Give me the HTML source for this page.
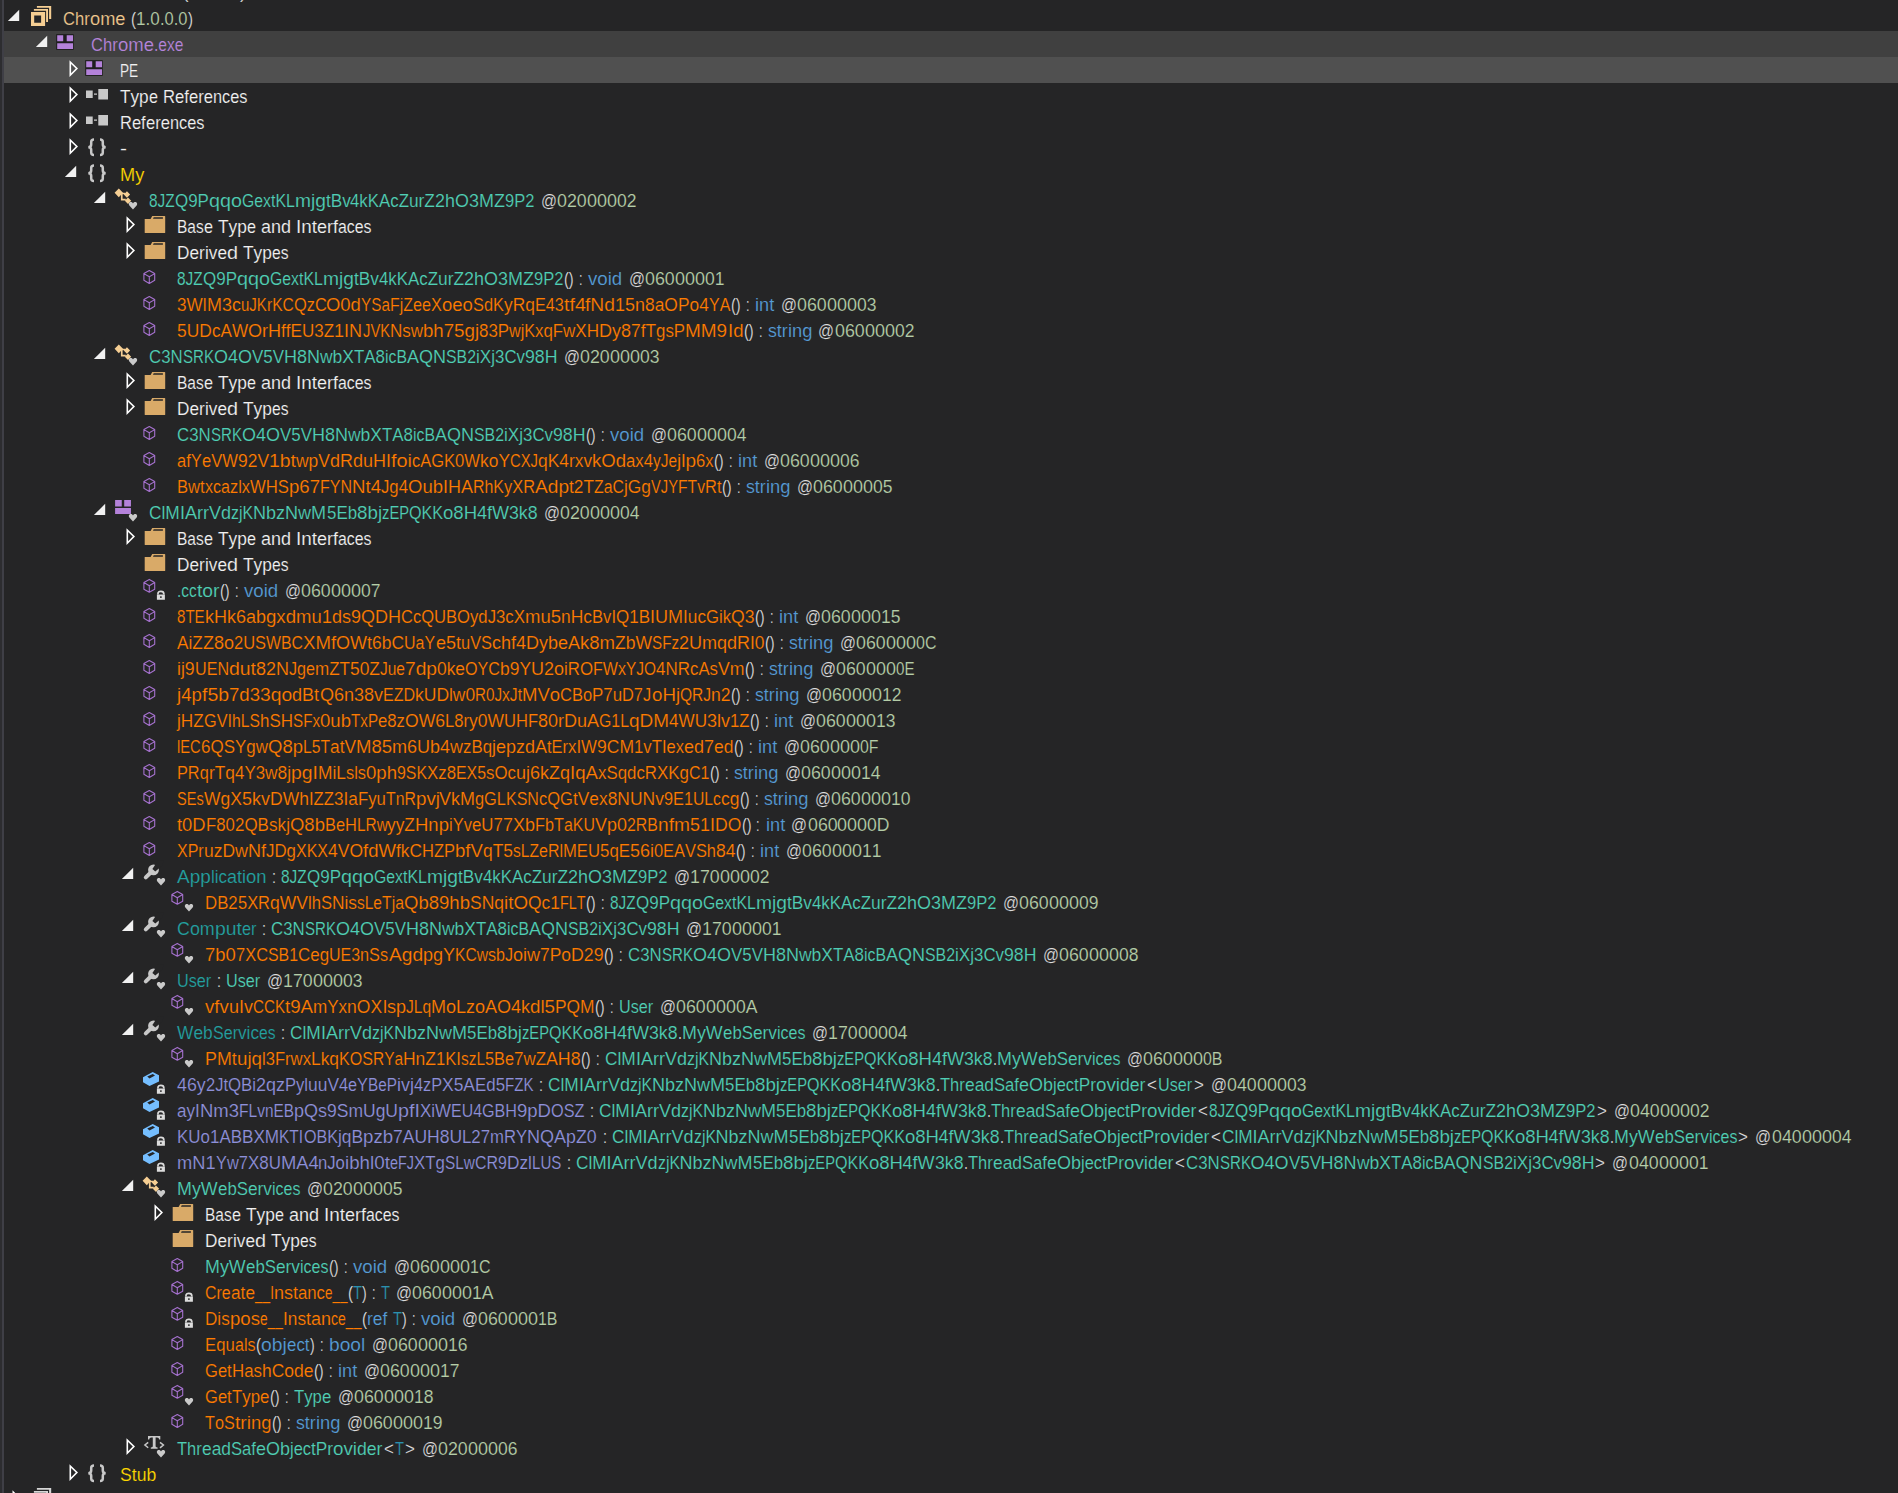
<!DOCTYPE html><html><head><meta charset="utf-8"><title>dnSpy</title><style>
html,body{margin:0;padding:0;background:#252526;}
body{width:1898px;height:1493px;overflow:hidden;position:relative;font-family:"Liberation Sans",sans-serif;font-size:18px;line-height:27px;font-kerning:none;font-variant-ligatures:none;-webkit-font-smoothing:antialiased;}
.hl{position:absolute;left:4px;width:1894px;height:26px;}
.s{position:absolute;white-space:pre;transform-origin:0 0;height:26px;-webkit-text-stroke:0.15px #252526;}
.h1{-webkit-text-stroke-color:#404040}.h2{-webkit-text-stroke-color:#505050}
#lb1{position:absolute;left:0;top:0;width:2px;height:1493px;background:#2D2D30;}
#lb2{position:absolute;left:2px;top:0;width:2px;height:1493px;background:#3F3F46;}
svg{position:absolute;left:0;top:0;}
.t{color:#F1F1F1}
.p{color:#DCDCDC}
.ty{color:#50CFB5}
.m{color:#FF7C00}
.k{color:#569CD6}
.n{color:#B5CEA8}
.ns{color:#FFD700}
.mod{color:#B685DC}
.asm{color:#F0C88E}
.pr{color:#23A0A0}
.f{color:#8E90DA}
.tp{color:#2B91AF}
</style></head><body>
<div id="lb1"></div><div id="lb2"></div>
<div class="hl" style="top:31px;background:#404040"></div>
<div class="hl" style="top:57px;background:#505050"></div>
<span class="s p" style="left:182.5px;top:-21px">(</span><span class="s p" style="left:240px;top:-21px">)</span>
<span class="s asm" style="left:63.3px;top:6px;transform:scaleX(0.921)">Chr</span>
<span class="s asm" style="left:90px;top:6px;transform:scaleX(1.014)">ome</span>
<span class="s p" style="left:131px;top:6px;transform:scaleX(0.834)">(</span>
<span class="s n" style="left:136.3px;top:6px;transform:scaleX(0.947)">1.0</span>
<span class="s n" style="left:160px;top:6px;transform:scaleX(0.916)">.0.0</span>
<span class="s p" style="left:188px;top:6px;transform:scaleX(0.834)">)</span>
<span class="s mod h1" style="left:91.3px;top:32px;transform:scaleX(0.921)">Chr</span>
<span class="s mod h1" style="left:118px;top:32px;transform:scaleX(1.028)">ome</span>
<span class="s mod h1" style="left:154px;top:32px;transform:scaleX(0.867)">.exe</span>
<span class="s t h2" style="left:120.3px;top:58px;transform:scaleX(0.758)">PE</span>
<span class="s t" style="left:120.3px;top:84px;transform:scaleX(0.956)">Typ</span>
<span class="s t" style="left:149px;top:84px;transform:scaleX(0.899)">e</span>
<span class="s t" style="left:163px;top:84px;transform:scaleX(0.928)">Ref</span>
<span class="s t" style="left:189px;top:84px;transform:scaleX(0.923)">ere</span>
<span class="s t" style="left:213px;top:84px;transform:scaleX(0.907)">nces</span>
<span class="s t" style="left:120.3px;top:110px;transform:scaleX(0.918)">Ref</span>
<span class="s t" style="left:146px;top:110px;transform:scaleX(0.923)">ere</span>
<span class="s t" style="left:170px;top:110px;transform:scaleX(0.907)">nces</span>
<span class="s t" style="left:120px;top:136px;transform:scaleX(1.168)">-</span>
<span class="s ns" style="left:120.3px;top:162px;transform:scaleX(1.009)">My</span>
<span class="s ty" style="left:149.3px;top:188px;transform:scaleX(0.854)">8JZ</span>
<span class="s ty" style="left:174.9px;top:188px;transform:scaleX(0.941)">Q9P</span>
<span class="s ty" style="left:208.8px;top:188px;transform:scaleX(1.095)">qqo</span>
<span class="s ty" style="left:241.7px;top:188px;transform:scaleX(0.876)">Gex</span>
<span class="s ty" style="left:270.6px;top:188px;transform:scaleX(0.886)">tKL</span>
<span class="s ty" style="left:294.5px;top:188px;transform:scaleX(1.066)">mjg</span>
<span class="s ty" style="left:325.5px;top:188px;transform:scaleX(0.958)">tBv</span>
<span class="s ty" style="left:350.4px;top:188px;transform:scaleX(0.932)">4kK</span>
<span class="s ty" style="left:379.3px;top:188px;transform:scaleX(0.935)">AcZ</span>
<span class="s ty" style="left:409.2px;top:188px;transform:scaleX(0.960)">urZ</span>
<span class="s ty" style="left:435.1px;top:188px;transform:scaleX(0.996)">2hO</span>
<span class="s ty" style="left:469px;top:188px;transform:scaleX(0.997)">3MZ</span>
<span class="s ty" style="left:504.9px;top:188px;transform:scaleX(0.918)">9P2</span>
<span class="s p" style="left:540.5px;top:188px;transform:scaleX(0.876)">@</span>
<span class="s n" style="left:557.1px;top:188px;transform:scaleX(0.989)">020</span>
<span class="s n" style="left:586.8px;top:188px;transform:scaleX(0.999)">000</span>
<span class="s n" style="left:616.8px;top:188px;transform:scaleX(0.974)">02</span>
<span class="s t" style="left:177.3px;top:214px;transform:scaleX(0.861)">Bas</span>
<span class="s t" style="left:204px;top:214px;transform:scaleX(0.899)">e</span>
<span class="s t" style="left:218px;top:214px;transform:scaleX(0.966)">Typ</span>
<span class="s t" style="left:247px;top:214px;transform:scaleX(0.899)">e</span>
<span class="s t" style="left:261px;top:214px;transform:scaleX(0.999)">and</span>
<span class="s t" style="left:296px;top:214px;transform:scaleX(1.049)">Int</span>
<span class="s t" style="left:317px;top:214px;transform:scaleX(1.000)">erf</span>
<span class="s t" style="left:338px;top:214px;transform:scaleX(0.881)">aces</span>
<span class="s t" style="left:177.3px;top:240px;transform:scaleX(0.955)">Der</span>
<span class="s t" style="left:205px;top:240px;transform:scaleX(0.956)">ive</span>
<span class="s t" style="left:227px;top:240px;transform:scaleX(1.099)">d</span>
<span class="s t" style="left:243px;top:240px;transform:scaleX(0.966)">Typ</span>
<span class="s t" style="left:272px;top:240px;transform:scaleX(0.868)">es</span>
<span class="s ty" style="left:177.3px;top:266px;transform:scaleX(0.856)">8JZ</span>
<span class="s ty" style="left:203px;top:266px;transform:scaleX(0.944)">Q9P</span>
<span class="s ty" style="left:237px;top:266px;transform:scaleX(1.099)">qqo</span>
<span class="s ty" style="left:270px;top:266px;transform:scaleX(0.878)">Gex</span>
<span class="s ty" style="left:299px;top:266px;transform:scaleX(0.888)">tKL</span>
<span class="s ty" style="left:323px;top:266px;transform:scaleX(1.069)">mjg</span>
<span class="s ty" style="left:354px;top:266px;transform:scaleX(0.961)">tBv</span>
<span class="s ty" style="left:379px;top:266px;transform:scaleX(0.935)">4kK</span>
<span class="s ty" style="left:408px;top:266px;transform:scaleX(0.937)">AcZ</span>
<span class="s ty" style="left:438px;top:266px;transform:scaleX(0.963)">urZ</span>
<span class="s ty" style="left:464px;top:266px;transform:scaleX(0.999)">2hO</span>
<span class="s ty" style="left:498px;top:266px;transform:scaleX(1.000)">3MZ</span>
<span class="s ty" style="left:534px;top:266px;transform:scaleX(0.921)">9P2</span>
<span class="s p" style="left:564.3px;top:266px;transform:scaleX(0.809)">()</span>
<span class="s p" style="left:579px;top:266px;transform:scaleX(0.700)">:</span>
<span class="s k" style="left:588.3px;top:266px;transform:scaleX(1.036)">void</span>
<span class="s p" style="left:628.7px;top:266px;transform:scaleX(0.876)">@</span>
<span class="s n" style="left:645.3px;top:266px;transform:scaleX(0.989)">060</span>
<span class="s n" style="left:675px;top:266px;transform:scaleX(0.999)">000</span>
<span class="s n" style="left:705px;top:266px;transform:scaleX(0.974)">01</span>
<span class="s m" style="left:177.3px;top:292px;transform:scaleX(0.954)">3Wl</span>
<span class="s m" style="left:206.9px;top:292px;transform:scaleX(0.996)">M3c</span>
<span class="s m" style="left:240.7px;top:292px;transform:scaleX(0.835)">uJK</span>
<span class="s m" style="left:266.6px;top:292px;transform:scaleX(0.868)">rKC</span>
<span class="s m" style="left:293.5px;top:292px;transform:scaleX(0.913)">QzC</span>
<span class="s m" style="left:326.4px;top:292px;transform:scaleX(1.025)">O0d</span>
<span class="s m" style="left:361.3px;top:292px;transform:scaleX(0.849)">YSa</span>
<span class="s m" style="left:390.2px;top:292px;transform:scaleX(0.881)">FjZ</span>
<span class="s m" style="left:413.1px;top:292px;transform:scaleX(0.902)">eeX</span>
<span class="s m" style="left:441.9px;top:292px;transform:scaleX(1.028)">oeo</span>
<span class="s m" style="left:472.8px;top:292px;transform:scaleX(0.908)">SdK</span>
<span class="s m" style="left:503.7px;top:292px;transform:scaleX(0.965)">yRq</span>
<span class="s m" style="left:534.6px;top:292px;transform:scaleX(0.902)">E43</span>
<span class="s m" style="left:563.5px;top:292px;transform:scaleX(1.095)">tf4</span>
<span class="s m" style="left:585.4px;top:292px;transform:scaleX(1.067)">fNd</span>
<span class="s m" style="left:615.3px;top:292px;transform:scaleX(0.995)">15n</span>
<span class="s m" style="left:645.1px;top:292px;transform:scaleX(0.966)">8aO</span>
<span class="s m" style="left:678px;top:292px;transform:scaleX(0.964)">Po4</span>
<span class="s m" style="left:708.9px;top:292px;transform:scaleX(0.892)">YA</span>
<span class="s p" style="left:731.1px;top:292px;transform:scaleX(0.809)">()</span>
<span class="s p" style="left:745.8px;top:292px;transform:scaleX(0.700)">:</span>
<span class="s k" style="left:755.1px;top:292px;transform:scaleX(1.010)">int</span>
<span class="s p" style="left:780.5px;top:292px;transform:scaleX(0.876)">@</span>
<span class="s n" style="left:797.1px;top:292px;transform:scaleX(0.989)">060</span>
<span class="s n" style="left:826.8px;top:292px;transform:scaleX(0.999)">000</span>
<span class="s n" style="left:856.8px;top:292px;transform:scaleX(0.974)">03</span>
<span class="s m" style="left:177.3px;top:318px;transform:scaleX(0.966)">5UD</span>
<span class="s m" style="left:212.1px;top:318px;transform:scaleX(0.950)">cAW</span>
<span class="s m" style="left:248.2px;top:318px;transform:scaleX(1.003)">OrH</span>
<span class="s m" style="left:281.3px;top:318px;transform:scaleX(0.957)">ffE</span>
<span class="s m" style="left:302.3px;top:318px;transform:scaleX(0.944)">U3Z</span>
<span class="s m" style="left:334.4px;top:318px;transform:scaleX(1.002)">1IN</span>
<span class="s m" style="left:362.5px;top:318px;transform:scaleX(0.820)">JVK</span>
<span class="s m" style="left:389.6px;top:318px;transform:scaleX(0.945)">Nsw</span>
<span class="s m" style="left:422.7px;top:318px;transform:scaleX(1.035)">bh7</span>
<span class="s m" style="left:453.7px;top:318px;transform:scaleX(1.044)">5gj</span>
<span class="s m" style="left:478.8px;top:318px;transform:scaleX(0.939)">83P</span>
<span class="s m" style="left:508.9px;top:318px;transform:scaleX(0.899)">wjK</span>
<span class="s m" style="left:534.9px;top:318px;transform:scaleX(0.936)">xqF</span>
<span class="s m" style="left:563px;top:318px;transform:scaleX(0.950)">wXH</span>
<span class="s m" style="left:599.1px;top:318px;transform:scaleX(1.002)">Dy8</span>
<span class="s m" style="left:631.2px;top:318px;transform:scaleX(0.964)">7fT</span>
<span class="s m" style="left:656.3px;top:318px;transform:scaleX(0.937)">gsP</span>
<span class="s m" style="left:685.3px;top:318px;transform:scaleX(1.053)">MM9</span>
<span class="s m" style="left:727.5px;top:318px;transform:scaleX(1.035)">Id</span>
<span class="s p" style="left:743.8px;top:318px;transform:scaleX(0.809)">()</span>
<span class="s p" style="left:758.5px;top:318px;transform:scaleX(0.700)">:</span>
<span class="s k" style="left:767.8px;top:318px;transform:scaleX(0.985)">str</span>
<span class="s k" style="left:787.5px;top:318px;transform:scaleX(1.020)">ing</span>
<span class="s p" style="left:818.2px;top:318px;transform:scaleX(0.876)">@</span>
<span class="s n" style="left:834.8px;top:318px;transform:scaleX(0.989)">060</span>
<span class="s n" style="left:864.5px;top:318px;transform:scaleX(0.999)">000</span>
<span class="s n" style="left:894.5px;top:318px;transform:scaleX(0.974)">02</span>
<span class="s ty" style="left:149.3px;top:344px;transform:scaleX(0.936)">C3N</span>
<span class="s ty" style="left:183px;top:344px;transform:scaleX(0.838)">SRK</span>
<span class="s ty" style="left:214px;top:344px;transform:scaleX(1.000)">O4O</span>
<span class="s ty" style="left:252px;top:344px;transform:scaleX(0.941)">V5V</span>
<span class="s ty" style="left:284px;top:344px;transform:scaleX(1.000)">H8N</span>
<span class="s ty" style="left:320px;top:344px;transform:scaleX(0.971)">wbX</span>
<span class="s ty" style="left:354px;top:344px;transform:scaleX(0.939)">TA8</span>
<span class="s ty" style="left:385px;top:344px;transform:scaleX(0.880)">icB</span>
<span class="s ty" style="left:407px;top:344px;transform:scaleX(1.000)">AQN</span>
<span class="s ty" style="left:446px;top:344px;transform:scaleX(0.882)">SB2</span>
<span class="s ty" style="left:476px;top:344px;transform:scaleX(0.950)">iXj</span>
<span class="s ty" style="left:495px;top:344px;transform:scaleX(0.937)">3Cv</span>
<span class="s ty" style="left:525px;top:344px;transform:scaleX(0.984)">98H</span>
<span class="s p" style="left:563.7px;top:344px;transform:scaleX(0.876)">@</span>
<span class="s n" style="left:580.3px;top:344px;transform:scaleX(0.989)">020</span>
<span class="s n" style="left:610px;top:344px;transform:scaleX(0.999)">000</span>
<span class="s n" style="left:640px;top:344px;transform:scaleX(0.974)">03</span>
<span class="s t" style="left:177.3px;top:370px;transform:scaleX(0.861)">Bas</span>
<span class="s t" style="left:204px;top:370px;transform:scaleX(0.899)">e</span>
<span class="s t" style="left:218px;top:370px;transform:scaleX(0.966)">Typ</span>
<span class="s t" style="left:247px;top:370px;transform:scaleX(0.899)">e</span>
<span class="s t" style="left:261px;top:370px;transform:scaleX(0.999)">and</span>
<span class="s t" style="left:296px;top:370px;transform:scaleX(1.049)">Int</span>
<span class="s t" style="left:317px;top:370px;transform:scaleX(1.000)">erf</span>
<span class="s t" style="left:338px;top:370px;transform:scaleX(0.881)">aces</span>
<span class="s t" style="left:177.3px;top:396px;transform:scaleX(0.955)">Der</span>
<span class="s t" style="left:205px;top:396px;transform:scaleX(0.956)">ive</span>
<span class="s t" style="left:227px;top:396px;transform:scaleX(1.099)">d</span>
<span class="s t" style="left:243px;top:396px;transform:scaleX(0.966)">Typ</span>
<span class="s t" style="left:272px;top:396px;transform:scaleX(0.868)">es</span>
<span class="s ty" style="left:177.3px;top:422px;transform:scaleX(0.936)">C3N</span>
<span class="s ty" style="left:211px;top:422px;transform:scaleX(0.838)">SRK</span>
<span class="s ty" style="left:242px;top:422px;transform:scaleX(1.000)">O4O</span>
<span class="s ty" style="left:280px;top:422px;transform:scaleX(0.941)">V5V</span>
<span class="s ty" style="left:312px;top:422px;transform:scaleX(1.000)">H8N</span>
<span class="s ty" style="left:348px;top:422px;transform:scaleX(0.971)">wbX</span>
<span class="s ty" style="left:382px;top:422px;transform:scaleX(0.939)">TA8</span>
<span class="s ty" style="left:413px;top:422px;transform:scaleX(0.880)">icB</span>
<span class="s ty" style="left:435px;top:422px;transform:scaleX(1.000)">AQN</span>
<span class="s ty" style="left:474px;top:422px;transform:scaleX(0.882)">SB2</span>
<span class="s ty" style="left:504px;top:422px;transform:scaleX(0.950)">iXj</span>
<span class="s ty" style="left:523px;top:422px;transform:scaleX(0.937)">3Cv</span>
<span class="s ty" style="left:553px;top:422px;transform:scaleX(0.984)">98H</span>
<span class="s p" style="left:586.3px;top:422px;transform:scaleX(0.809)">()</span>
<span class="s p" style="left:601px;top:422px;transform:scaleX(0.700)">:</span>
<span class="s k" style="left:610.3px;top:422px;transform:scaleX(1.036)">void</span>
<span class="s p" style="left:650.7px;top:422px;transform:scaleX(0.876)">@</span>
<span class="s n" style="left:667.3px;top:422px;transform:scaleX(0.989)">060</span>
<span class="s n" style="left:697px;top:422px;transform:scaleX(0.999)">000</span>
<span class="s n" style="left:727px;top:422px;transform:scaleX(0.974)">04</span>
<span class="s m" style="left:177.3px;top:448px;transform:scaleX(0.914)">afY</span>
<span class="s m" style="left:202px;top:448px;transform:scaleX(0.923)">eVW</span>
<span class="s m" style="left:238px;top:448px;transform:scaleX(0.968)">92V</span>
<span class="s m" style="left:269px;top:448px;transform:scaleX(1.079)">1bt</span>
<span class="s m" style="left:296px;top:448px;transform:scaleX(0.971)">wpV</span>
<span class="s m" style="left:330px;top:448px;transform:scaleX(0.999)">dRd</span>
<span class="s m" style="left:363px;top:448px;transform:scaleX(1.000)">uHI</span>
<span class="s m" style="left:391px;top:448px;transform:scaleX(1.105)">foi</span>
<span class="s m" style="left:412px;top:448px;transform:scaleX(0.914)">cAG</span>
<span class="s m" style="left:444px;top:448px;transform:scaleX(0.923)">K0W</span>
<span class="s m" style="left:480px;top:448px;transform:scaleX(0.967)">koY</span>
<span class="s m" style="left:510px;top:448px;transform:scaleX(0.823)">CXJ</span>
<span class="s m" style="left:538px;top:448px;transform:scaleX(0.968)">qK4</span>
<span class="s m" style="left:569px;top:448px;transform:scaleX(0.959)">rxv</span>
<span class="s m" style="left:592px;top:448px;transform:scaleX(1.030)">kOd</span>
<span class="s m" style="left:626px;top:448px;transform:scaleX(0.930)">ax4</span>
<span class="s m" style="left:653px;top:448px;transform:scaleX(0.857)">yJe</span>
<span class="s m" style="left:677px;top:448px;transform:scaleX(1.055)">jlp</span>
<span class="s m" style="left:696px;top:448px;transform:scaleX(0.921)">6x</span>
<span class="s p" style="left:714.3px;top:448px;transform:scaleX(0.809)">()</span>
<span class="s p" style="left:729px;top:448px;transform:scaleX(0.700)">:</span>
<span class="s k" style="left:738.3px;top:448px;transform:scaleX(1.010)">int</span>
<span class="s p" style="left:763.7px;top:448px;transform:scaleX(0.876)">@</span>
<span class="s n" style="left:780.3px;top:448px;transform:scaleX(0.989)">060</span>
<span class="s n" style="left:810px;top:448px;transform:scaleX(0.999)">000</span>
<span class="s n" style="left:840px;top:448px;transform:scaleX(0.974)">06</span>
<span class="s m" style="left:177.3px;top:474px;transform:scaleX(0.923)">Bwt</span>
<span class="s m" style="left:205px;top:474px;transform:scaleX(0.893)">xca</span>
<span class="s m" style="left:230px;top:474px;transform:scaleX(0.909)">zlx</span>
<span class="s m" style="left:250px;top:474px;transform:scaleX(0.929)">WHS</span>
<span class="s m" style="left:289px;top:474px;transform:scaleX(1.032)">p67</span>
<span class="s m" style="left:320px;top:474px;transform:scaleX(0.889)">FYN</span>
<span class="s m" style="left:352px;top:474px;transform:scaleX(1.035)">Nt4</span>
<span class="s m" style="left:381px;top:474px;transform:scaleX(0.930)">Jg4</span>
<span class="s m" style="left:408px;top:474px;transform:scaleX(1.029)">Oub</span>
<span class="s m" style="left:443px;top:474px;transform:scaleX(1.000)">IHA</span>
<span class="s m" style="left:473px;top:474px;transform:scaleX(0.885)">RhK</span>
<span class="s m" style="left:504px;top:474px;transform:scaleX(0.912)">yXR</span>
<span class="s m" style="left:535px;top:474px;transform:scaleX(1.062)">Adp</span>
<span class="s m" style="left:569px;top:474px;transform:scaleX(0.961)">t2T</span>
<span class="s m" style="left:594px;top:474px;transform:scaleX(0.882)">ZaC</span>
<span class="s m" style="left:624px;top:474px;transform:scaleX(0.964)">jGg</span>
<span class="s m" style="left:651px;top:474px;transform:scaleX(0.818)">VJY</span>
<span class="s m" style="left:678px;top:474px;transform:scaleX(0.871)">FTv</span>
<span class="s m" style="left:705px;top:474px;transform:scaleX(0.917)">Rt</span>
<span class="s p" style="left:722.3px;top:474px;transform:scaleX(0.809)">()</span>
<span class="s p" style="left:737px;top:474px;transform:scaleX(0.700)">:</span>
<span class="s k" style="left:746.3px;top:474px;transform:scaleX(0.985)">str</span>
<span class="s k" style="left:766px;top:474px;transform:scaleX(1.020)">ing</span>
<span class="s p" style="left:796.7px;top:474px;transform:scaleX(0.876)">@</span>
<span class="s n" style="left:813.3px;top:474px;transform:scaleX(0.989)">060</span>
<span class="s n" style="left:843px;top:474px;transform:scaleX(0.999)">000</span>
<span class="s n" style="left:873px;top:474px;transform:scaleX(0.974)">05</span>
<span class="s ty" style="left:149.3px;top:500px;transform:scaleX(0.962)">ClM</span>
<span class="s ty" style="left:180.1px;top:500px;transform:scaleX(1.003)">IAr</span>
<span class="s ty" style="left:203.1px;top:500px;transform:scaleX(1.002)">rVd</span>
<span class="s ty" style="left:231.2px;top:500px;transform:scaleX(0.882)">zjK</span>
<span class="s ty" style="left:253.3px;top:500px;transform:scaleX(1.002)">Nbz</span>
<span class="s ty" style="left:285.4px;top:500px;transform:scaleX(1.003)">NwM</span>
<span class="s ty" style="left:326.5px;top:500px;transform:scaleX(0.939)">5Eb</span>
<span class="s ty" style="left:356.5px;top:500px;transform:scaleX(1.043)">8bj</span>
<span class="s ty" style="left:381.6px;top:500px;transform:scaleX(0.820)">zEP</span>
<span class="s ty" style="left:408.7px;top:500px;transform:scaleX(0.897)">QKK</span>
<span class="s ty" style="left:442.8px;top:500px;transform:scaleX(1.032)">o8H</span>
<span class="s ty" style="left:476.8px;top:500px;transform:scaleX(1.003)">4fW</span>
<span class="s ty" style="left:508.9px;top:500px;transform:scaleX(0.985)">3k8</span>
<span class="s p" style="left:543.7px;top:500px;transform:scaleX(0.876)">@</span>
<span class="s n" style="left:560.3px;top:500px;transform:scaleX(0.989)">020</span>
<span class="s n" style="left:590px;top:500px;transform:scaleX(0.999)">000</span>
<span class="s n" style="left:620px;top:500px;transform:scaleX(0.974)">04</span>
<span class="s t" style="left:177.3px;top:526px;transform:scaleX(0.861)">Bas</span>
<span class="s t" style="left:204px;top:526px;transform:scaleX(0.899)">e</span>
<span class="s t" style="left:218px;top:526px;transform:scaleX(0.966)">Typ</span>
<span class="s t" style="left:247px;top:526px;transform:scaleX(0.899)">e</span>
<span class="s t" style="left:261px;top:526px;transform:scaleX(0.999)">and</span>
<span class="s t" style="left:296px;top:526px;transform:scaleX(1.049)">Int</span>
<span class="s t" style="left:317px;top:526px;transform:scaleX(1.000)">erf</span>
<span class="s t" style="left:338px;top:526px;transform:scaleX(0.881)">aces</span>
<span class="s t" style="left:177.3px;top:552px;transform:scaleX(0.955)">Der</span>
<span class="s t" style="left:205px;top:552px;transform:scaleX(0.956)">ive</span>
<span class="s t" style="left:227px;top:552px;transform:scaleX(1.099)">d</span>
<span class="s t" style="left:243px;top:552px;transform:scaleX(0.966)">Typ</span>
<span class="s t" style="left:272px;top:552px;transform:scaleX(0.868)">es</span>
<span class="s ty" style="left:177.3px;top:578px;transform:scaleX(0.856)">.cc</span>
<span class="s ty" style="left:197px;top:578px;transform:scaleX(1.071)">tor</span>
<span class="s p" style="left:220.3px;top:578px;transform:scaleX(0.809)">()</span>
<span class="s p" style="left:235px;top:578px;transform:scaleX(0.700)">:</span>
<span class="s k" style="left:244.3px;top:578px;transform:scaleX(1.036)">void</span>
<span class="s p" style="left:284.7px;top:578px;transform:scaleX(0.876)">@</span>
<span class="s n" style="left:301.3px;top:578px;transform:scaleX(0.989)">060</span>
<span class="s n" style="left:331px;top:578px;transform:scaleX(0.999)">000</span>
<span class="s n" style="left:361px;top:578px;transform:scaleX(0.974)">07</span>
<span class="s m" style="left:177.3px;top:604px;transform:scaleX(0.839)">8TE</span>
<span class="s m" style="left:205px;top:604px;transform:scaleX(1.000)">kHk</span>
<span class="s m" style="left:236px;top:604px;transform:scaleX(0.999)">6ab</span>
<span class="s m" style="left:266px;top:604px;transform:scaleX(1.034)">gxd</span>
<span class="s m" style="left:296px;top:604px;transform:scaleX(1.028)">mu1</span>
<span class="s m" style="left:332px;top:604px;transform:scaleX(0.999)">ds9</span>
<span class="s m" style="left:361px;top:604px;transform:scaleX(1.000)">QDH</span>
<span class="s m" style="left:401px;top:604px;transform:scaleX(0.917)">CcQ</span>
<span class="s m" style="left:434px;top:604px;transform:scaleX(0.923)">UBO</span>
<span class="s m" style="left:470px;top:604px;transform:scaleX(0.928)">ydJ</span>
<span class="s m" style="left:496px;top:604px;transform:scaleX(0.935)">3cX</span>
<span class="s m" style="left:525px;top:604px;transform:scaleX(1.028)">mu5</span>
<span class="s m" style="left:561px;top:604px;transform:scaleX(0.968)">nHc</span>
<span class="s m" style="left:592px;top:604px;transform:scaleX(0.923)">BvI</span>
<span class="s m" style="left:616px;top:604px;transform:scaleX(0.944)">Q1B</span>
<span class="s m" style="left:650px;top:604px;transform:scaleX(1.000)">IUM</span>
<span class="s m" style="left:683px;top:604px;transform:scaleX(0.958)">Iuc</span>
<span class="s m" style="left:706px;top:604px;transform:scaleX(0.926)">Gik</span>
<span class="s m" style="left:731px;top:604px;transform:scaleX(0.979)">Q3</span>
<span class="s p" style="left:755.3px;top:604px;transform:scaleX(0.809)">()</span>
<span class="s p" style="left:770px;top:604px;transform:scaleX(0.700)">:</span>
<span class="s k" style="left:779.3px;top:604px;transform:scaleX(1.010)">int</span>
<span class="s p" style="left:804.7px;top:604px;transform:scaleX(0.876)">@</span>
<span class="s n" style="left:821.3px;top:604px;transform:scaleX(0.989)">060</span>
<span class="s n" style="left:851px;top:604px;transform:scaleX(0.999)">000</span>
<span class="s n" style="left:881px;top:604px;transform:scaleX(0.974)">15</span>
<span class="s m" style="left:177.3px;top:630px;transform:scaleX(0.954)">AiZ</span>
<span class="s m" style="left:203px;top:630px;transform:scaleX(1.001)">Z8o</span>
<span class="s m" style="left:234.1px;top:630px;transform:scaleX(0.916)">2US</span>
<span class="s m" style="left:266.2px;top:630px;transform:scaleX(0.883)">WBC</span>
<span class="s m" style="left:303.2px;top:630px;transform:scaleX(1.033)">XMf</span>
<span class="s m" style="left:336.3px;top:630px;transform:scaleX(1.002)">OWt</span>
<span class="s m" style="left:372.4px;top:630px;transform:scaleX(0.971)">6bC</span>
<span class="s m" style="left:404.4px;top:630px;transform:scaleX(0.887)">UaY</span>
<span class="s m" style="left:435.5px;top:630px;transform:scaleX(1.001)">e5t</span>
<span class="s m" style="left:460.5px;top:630px;transform:scaleX(0.913)">uVS</span>
<span class="s m" style="left:491.6px;top:630px;transform:scaleX(1.001)">chf</span>
<span class="s m" style="left:515.6px;top:630px;transform:scaleX(1.002)">4Dy</span>
<span class="s m" style="left:547.7px;top:630px;transform:scaleX(1.001)">beA</span>
<span class="s m" style="left:579.8px;top:630px;transform:scaleX(1.031)">k8m</span>
<span class="s m" style="left:614.8px;top:630px;transform:scaleX(0.976)">ZbW</span>
<span class="s m" style="left:651.9px;top:630px;transform:scaleX(0.845)">SFz</span>
<span class="s m" style="left:678.9px;top:630px;transform:scaleX(1.002)">2Um</span>
<span class="s m" style="left:717px;top:630px;transform:scaleX(1.001)">qdR</span>
<span class="s m" style="left:750.1px;top:630px;transform:scaleX(0.968)">I0</span>
<span class="s p" style="left:765.4px;top:630px;transform:scaleX(0.809)">()</span>
<span class="s p" style="left:780.1px;top:630px;transform:scaleX(0.700)">:</span>
<span class="s k" style="left:789.4px;top:630px;transform:scaleX(0.985)">str</span>
<span class="s k" style="left:809.1px;top:630px;transform:scaleX(1.020)">ing</span>
<span class="s p" style="left:839.8px;top:630px;transform:scaleX(0.876)">@</span>
<span class="s n" style="left:856.4px;top:630px;transform:scaleX(0.989)">060</span>
<span class="s n" style="left:886.1px;top:630px;transform:scaleX(0.999)">000</span>
<span class="s n" style="left:916.1px;top:630px;transform:scaleX(0.891)">0C</span>
<span class="s m" style="left:177.3px;top:656px;transform:scaleX(0.983)">ij9</span>
<span class="s m" style="left:195px;top:656px;transform:scaleX(0.895)">UEN</span>
<span class="s m" style="left:229px;top:656px;transform:scaleX(1.079)">dut</span>
<span class="s m" style="left:256px;top:656px;transform:scaleX(0.999)">82N</span>
<span class="s m" style="left:289px;top:656px;transform:scaleX(0.896)">Jge</span>
<span class="s m" style="left:315px;top:656px;transform:scaleX(0.946)">mZT</span>
<span class="s m" style="left:350px;top:656px;transform:scaleX(0.967)">50Z</span>
<span class="s m" style="left:380px;top:656px;transform:scaleX(0.861)">Jue</span>
<span class="s m" style="left:405px;top:656px;transform:scaleX(1.066)">7dp</span>
<span class="s m" style="left:437px;top:656px;transform:scaleX(0.965)">0ke</span>
<span class="s m" style="left:465px;top:656px;transform:scaleX(0.897)">OYC</span>
<span class="s m" style="left:500px;top:656px;transform:scaleX(0.968)">b9Y</span>
<span class="s m" style="left:531px;top:656px;transform:scaleX(0.999)">U2o</span>
<span class="s m" style="left:564px;top:656px;transform:scaleX(0.936)">iRO</span>
<span class="s m" style="left:593px;top:656px;transform:scaleX(0.892)">FWx</span>
<span class="s m" style="left:626px;top:656px;transform:scaleX(0.857)">YJO</span>
<span class="s m" style="left:656px;top:656px;transform:scaleX(0.944)">4NR</span>
<span class="s m" style="left:690px;top:656px;transform:scaleX(0.933)">cAs</span>
<span class="s m" style="left:718px;top:656px;transform:scaleX(0.981)">Vm</span>
<span class="s p" style="left:745.3px;top:656px;transform:scaleX(0.809)">()</span>
<span class="s p" style="left:760px;top:656px;transform:scaleX(0.700)">:</span>
<span class="s k" style="left:769.3px;top:656px;transform:scaleX(0.985)">str</span>
<span class="s k" style="left:789px;top:656px;transform:scaleX(1.020)">ing</span>
<span class="s p" style="left:819.7px;top:656px;transform:scaleX(0.876)">@</span>
<span class="s n" style="left:836.3px;top:656px;transform:scaleX(0.989)">060</span>
<span class="s n" style="left:866px;top:656px;transform:scaleX(0.999)">000</span>
<span class="s n" style="left:896px;top:656px;transform:scaleX(0.840)">0E</span>
<span class="s m" style="left:177.3px;top:682px;transform:scaleX(1.032)">j4p</span>
<span class="s m" style="left:202.1px;top:682px;transform:scaleX(1.083)">f5b</span>
<span class="s m" style="left:229.2px;top:682px;transform:scaleX(1.036)">7d3</span>
<span class="s m" style="left:260.3px;top:682px;transform:scaleX(1.069)">3qo</span>
<span class="s m" style="left:292.4px;top:682px;transform:scaleX(1.003)">dBt</span>
<span class="s m" style="left:319.5px;top:682px;transform:scaleX(1.003)">Q6n</span>
<span class="s m" style="left:353.6px;top:682px;transform:scaleX(1.003)">38v</span>
<span class="s m" style="left:382.7px;top:682px;transform:scaleX(0.892)">EZD</span>
<span class="s m" style="left:414.8px;top:682px;transform:scaleX(0.975)">kUD</span>
<span class="s m" style="left:448.9px;top:682px;transform:scaleX(0.966)">lw0</span>
<span class="s m" style="left:475px;top:682px;transform:scaleX(0.846)">R0J</span>
<span class="s m" style="left:502.1px;top:682px;transform:scaleX(0.872)">xJt</span>
<span class="s m" style="left:522.1px;top:682px;transform:scaleX(1.030)">MVo</span>
<span class="s m" style="left:560.2px;top:682px;transform:scaleX(0.917)">CBo</span>
<span class="s m" style="left:592.4px;top:682px;transform:scaleX(0.940)">P7u</span>
<span class="s m" style="left:622.4px;top:682px;transform:scaleX(0.909)">D7J</span>
<span class="s m" style="left:651.5px;top:682px;transform:scaleX(1.040)">oHj</span>
<span class="s m" style="left:679.6px;top:682px;transform:scaleX(0.864)">QRJ</span>
<span class="s m" style="left:710.7px;top:682px;transform:scaleX(0.977)">n2</span>
<span class="s p" style="left:731.1px;top:682px;transform:scaleX(0.809)">()</span>
<span class="s p" style="left:745.8px;top:682px;transform:scaleX(0.700)">:</span>
<span class="s k" style="left:755.1px;top:682px;transform:scaleX(0.985)">str</span>
<span class="s k" style="left:774.8px;top:682px;transform:scaleX(1.020)">ing</span>
<span class="s p" style="left:805.5px;top:682px;transform:scaleX(0.876)">@</span>
<span class="s n" style="left:822.1px;top:682px;transform:scaleX(0.989)">060</span>
<span class="s n" style="left:851.8px;top:682px;transform:scaleX(0.999)">000</span>
<span class="s n" style="left:881.8px;top:682px;transform:scaleX(0.974)">12</span>
<span class="s m" style="left:177.3px;top:708px;transform:scaleX(0.954)">jHZ</span>
<span class="s m" style="left:204px;top:708px;transform:scaleX(0.903)">GVI</span>
<span class="s m" style="left:232px;top:708px;transform:scaleX(0.874)">hLS</span>
<span class="s m" style="left:260px;top:708px;transform:scaleX(0.942)">hSH</span>
<span class="s m" style="left:293px;top:708px;transform:scaleX(0.844)">SFx</span>
<span class="s m" style="left:320px;top:708px;transform:scaleX(1.032)">0ub</span>
<span class="s m" style="left:351px;top:708px;transform:scaleX(0.844)">TxP</span>
<span class="s m" style="left:378px;top:708px;transform:scaleX(0.930)">e8z</span>
<span class="s m" style="left:405px;top:708px;transform:scaleX(0.976)">OW6</span>
<span class="s m" style="left:445px;top:708px;transform:scaleX(0.923)">L8r</span>
<span class="s m" style="left:469px;top:708px;transform:scaleX(0.972)">y0W</span>
<span class="s m" style="left:504px;top:708px;transform:scaleX(0.919)">UHF</span>
<span class="s m" style="left:538px;top:708px;transform:scaleX(0.999)">80r</span>
<span class="s m" style="left:564px;top:708px;transform:scaleX(1.000)">DuA</span>
<span class="s m" style="left:599px;top:708px;transform:scaleX(0.882)">G1L</span>
<span class="s m" style="left:629px;top:708px;transform:scaleX(1.053)">qDM</span>
<span class="s m" style="left:669px;top:708px;transform:scaleX(0.950)">4WU</span>
<span class="s m" style="left:707px;top:708px;transform:scaleX(1.000)">3lv</span>
<span class="s m" style="left:730px;top:708px;transform:scaleX(0.928)">1Z</span>
<span class="s p" style="left:750.3px;top:708px;transform:scaleX(0.809)">()</span>
<span class="s p" style="left:765px;top:708px;transform:scaleX(0.700)">:</span>
<span class="s k" style="left:774.3px;top:708px;transform:scaleX(1.010)">int</span>
<span class="s p" style="left:799.7px;top:708px;transform:scaleX(0.876)">@</span>
<span class="s n" style="left:816.3px;top:708px;transform:scaleX(0.989)">060</span>
<span class="s n" style="left:846px;top:708px;transform:scaleX(0.999)">000</span>
<span class="s n" style="left:876px;top:708px;transform:scaleX(0.974)">13</span>
<span class="s m" style="left:177.3px;top:734px;transform:scaleX(0.817)">lEC</span>
<span class="s m" style="left:201px;top:734px;transform:scaleX(0.944)">6QS</span>
<span class="s m" style="left:235px;top:734px;transform:scaleX(0.942)">Ygw</span>
<span class="s m" style="left:268px;top:734px;transform:scaleX(1.029)">Q8p</span>
<span class="s m" style="left:303px;top:734px;transform:scaleX(0.871)">L5T</span>
<span class="s m" style="left:330px;top:734px;transform:scaleX(0.962)">atV</span>
<span class="s m" style="left:356px;top:734px;transform:scaleX(1.028)">M85</span>
<span class="s m" style="left:392px;top:734px;transform:scaleX(1.000)">m6U</span>
<span class="s m" style="left:430px;top:734px;transform:scaleX(0.999)">b4w</span>
<span class="s m" style="left:463px;top:734px;transform:scaleX(0.935)">zBq</span>
<span class="s m" style="left:492px;top:734px;transform:scaleX(0.999)">jep</span>
<span class="s m" style="left:516px;top:734px;transform:scaleX(0.999)">zdA</span>
<span class="s m" style="left:547px;top:734px;transform:scaleX(0.913)">tEr</span>
<span class="s m" style="left:568px;top:734px;transform:scaleX(0.936)">xIW</span>
<span class="s m" style="left:597px;top:734px;transform:scaleX(0.974)">9CM</span>
<span class="s m" style="left:634px;top:734px;transform:scaleX(0.933)">1vT</span>
<span class="s m" style="left:662px;top:734px;transform:scaleX(0.916)">Iex</span>
<span class="s m" style="left:684px;top:734px;transform:scaleX(0.999)">ed7</span>
<span class="s m" style="left:714px;top:734px;transform:scaleX(0.974)">ed</span>
<span class="s p" style="left:734.3px;top:734px;transform:scaleX(0.809)">()</span>
<span class="s p" style="left:749px;top:734px;transform:scaleX(0.700)">:</span>
<span class="s k" style="left:758.3px;top:734px;transform:scaleX(1.010)">int</span>
<span class="s p" style="left:783.7px;top:734px;transform:scaleX(0.876)">@</span>
<span class="s n" style="left:800.3px;top:734px;transform:scaleX(0.989)">060</span>
<span class="s n" style="left:830px;top:734px;transform:scaleX(0.999)">000</span>
<span class="s n" style="left:860px;top:734px;transform:scaleX(0.881)">0F</span>
<span class="s m" style="left:177.3px;top:760px;transform:scaleX(0.905)">PRq</span>
<span class="s m" style="left:209px;top:760px;transform:scaleX(0.963)">rTq</span>
<span class="s m" style="left:235px;top:760px;transform:scaleX(0.937)">4Y3</span>
<span class="s m" style="left:265px;top:760px;transform:scaleX(0.963)">w8j</span>
<span class="s m" style="left:291px;top:760px;transform:scaleX(1.079)">pgI</span>
<span class="s m" style="left:318px;top:760px;transform:scaleX(0.965)">MiL</span>
<span class="s m" style="left:346px;top:760px;transform:scaleX(0.909)">sls</span>
<span class="s m" style="left:366px;top:760px;transform:scaleX(1.032)">0ph</span>
<span class="s m" style="left:397px;top:760px;transform:scaleX(0.882)">9SK</span>
<span class="s m" style="left:427px;top:760px;transform:scaleX(0.935)">Xz8</span>
<span class="s m" style="left:456px;top:760px;transform:scaleX(0.882)">EX5</span>
<span class="s m" style="left:486px;top:760px;transform:scaleX(0.937)">sOc</span>
<span class="s m" style="left:516px;top:760px;transform:scaleX(0.999)">uj6</span>
<span class="s m" style="left:540px;top:760px;transform:scaleX(1.000)">kZq</span>
<span class="s m" style="left:570px;top:760px;transform:scaleX(1.036)">IqA</span>
<span class="s m" style="left:598px;top:760px;transform:scaleX(0.935)">xSq</span>
<span class="s m" style="left:627px;top:760px;transform:scaleX(0.937)">dcR</span>
<span class="s m" style="left:657px;top:760px;transform:scaleX(0.941)">XKg</span>
<span class="s m" style="left:689px;top:760px;transform:scaleX(0.891)">C1</span>
<span class="s p" style="left:710.3px;top:760px;transform:scaleX(0.809)">()</span>
<span class="s p" style="left:725px;top:760px;transform:scaleX(0.700)">:</span>
<span class="s k" style="left:734.3px;top:760px;transform:scaleX(0.985)">str</span>
<span class="s k" style="left:754px;top:760px;transform:scaleX(1.020)">ing</span>
<span class="s p" style="left:784.7px;top:760px;transform:scaleX(0.876)">@</span>
<span class="s n" style="left:801.3px;top:760px;transform:scaleX(0.989)">060</span>
<span class="s n" style="left:831px;top:760px;transform:scaleX(0.999)">000</span>
<span class="s n" style="left:861px;top:760px;transform:scaleX(0.974)">14</span>
<span class="s m" style="left:177.3px;top:786px;transform:scaleX(0.807)">SEs</span>
<span class="s m" style="left:203.9px;top:786px;transform:scaleX(0.972)">WgX</span>
<span class="s m" style="left:241.9px;top:786px;transform:scaleX(0.997)">5kv</span>
<span class="s m" style="left:269.8px;top:786px;transform:scaleX(0.973)">DWh</span>
<span class="s m" style="left:308.7px;top:786px;transform:scaleX(0.924)">IZZ</span>
<span class="s m" style="left:333.7px;top:786px;transform:scaleX(0.957)">3Ia</span>
<span class="s m" style="left:357.6px;top:786px;transform:scaleX(0.931)">Fyu</span>
<span class="s m" style="left:385.6px;top:786px;transform:scaleX(0.880)">TnR</span>
<span class="s m" style="left:415.5px;top:786px;transform:scaleX(1.041)">pvj</span>
<span class="s m" style="left:439.4px;top:786px;transform:scaleX(0.998)">VkM</span>
<span class="s m" style="left:475.4px;top:786px;transform:scaleX(0.909)">gGL</span>
<span class="s m" style="left:506.3px;top:786px;transform:scaleX(0.890)">KSN</span>
<span class="s m" style="left:539.2px;top:786px;transform:scaleX(0.917)">cQG</span>
<span class="s m" style="left:573.2px;top:786px;transform:scaleX(0.960)">tVe</span>
<span class="s m" style="left:599.1px;top:786px;transform:scaleX(0.966)">x8N</span>
<span class="s m" style="left:630px;top:786px;transform:scaleX(0.969)">UNv</span>
<span class="s m" style="left:664px;top:786px;transform:scaleX(0.904)">9E1</span>
<span class="s m" style="left:692.9px;top:786px;transform:scaleX(0.873)">ULc</span>
<span class="s m" style="left:720.8px;top:786px;transform:scaleX(0.971)">cg</span>
<span class="s p" style="left:740.1px;top:786px;transform:scaleX(0.809)">()</span>
<span class="s p" style="left:754.8px;top:786px;transform:scaleX(0.700)">:</span>
<span class="s k" style="left:764.1px;top:786px;transform:scaleX(0.985)">str</span>
<span class="s k" style="left:783.8px;top:786px;transform:scaleX(1.020)">ing</span>
<span class="s p" style="left:814.5px;top:786px;transform:scaleX(0.876)">@</span>
<span class="s n" style="left:831.1px;top:786px;transform:scaleX(0.989)">060</span>
<span class="s n" style="left:860.8px;top:786px;transform:scaleX(0.999)">000</span>
<span class="s n" style="left:890.8px;top:786px;transform:scaleX(0.974)">10</span>
<span class="s m" style="left:177.3px;top:812px;transform:scaleX(1.022)">t0D</span>
<span class="s m" style="left:205.9px;top:812px;transform:scaleX(0.932)">F80</span>
<span class="s m" style="left:234.8px;top:812px;transform:scaleX(0.941)">2QB</span>
<span class="s m" style="left:268.7px;top:812px;transform:scaleX(0.952)">skj</span>
<span class="s m" style="left:289.7px;top:812px;transform:scaleX(1.026)">Q8b</span>
<span class="s m" style="left:324.6px;top:812px;transform:scaleX(0.911)">BeH</span>
<span class="s m" style="left:356.5px;top:812px;transform:scaleX(0.858)">LRw</span>
<span class="s m" style="left:387.4px;top:812px;transform:scaleX(0.963)">yyZ</span>
<span class="s m" style="left:415.3px;top:812px;transform:scaleX(1.027)">Hnp</span>
<span class="s m" style="left:449.2px;top:812px;transform:scaleX(0.917)">iYv</span>
<span class="s m" style="left:472.2px;top:812px;transform:scaleX(0.936)">eU7</span>
<span class="s m" style="left:503.1px;top:812px;transform:scaleX(0.996)">7Xb</span>
<span class="s m" style="left:535px;top:812px;transform:scaleX(0.904)">FbT</span>
<span class="s m" style="left:563.9px;top:812px;transform:scaleX(0.883)">aKU</span>
<span class="s m" style="left:594.8px;top:812px;transform:scaleX(0.996)">Vp0</span>
<span class="s m" style="left:626.7px;top:812px;transform:scaleX(0.883)">2RB</span>
<span class="s m" style="left:657.6px;top:812px;transform:scaleX(1.063)">nfm</span>
<span class="s m" style="left:689.5px;top:812px;transform:scaleX(0.996)">51I</span>
<span class="s m" style="left:714.5px;top:812px;transform:scaleX(0.979)">DO</span>
<span class="s p" style="left:741.7px;top:812px;transform:scaleX(0.809)">()</span>
<span class="s p" style="left:756.4px;top:812px;transform:scaleX(0.700)">:</span>
<span class="s k" style="left:765.7px;top:812px;transform:scaleX(1.010)">int</span>
<span class="s p" style="left:791.1px;top:812px;transform:scaleX(0.876)">@</span>
<span class="s n" style="left:807.7px;top:812px;transform:scaleX(0.989)">060</span>
<span class="s n" style="left:837.4px;top:812px;transform:scaleX(0.999)">000</span>
<span class="s n" style="left:867.4px;top:812px;transform:scaleX(0.978)">0D</span>
<span class="s m" style="left:177.3px;top:838px;transform:scaleX(0.890)">XPr</span>
<span class="s m" style="left:204px;top:838px;transform:scaleX(0.968)">uzD</span>
<span class="s m" style="left:235px;top:838px;transform:scaleX(1.000)">wNf</span>
<span class="s m" style="left:266px;top:838px;transform:scaleX(0.937)">JDg</span>
<span class="s m" style="left:296px;top:838px;transform:scaleX(0.888)">XKX</span>
<span class="s m" style="left:328px;top:838px;transform:scaleX(0.972)">4VO</span>
<span class="s m" style="left:363px;top:838px;transform:scaleX(1.031)">fdW</span>
<span class="s m" style="left:396px;top:838px;transform:scaleX(0.963)">fkC</span>
<span class="s m" style="left:422px;top:838px;transform:scaleX(0.917)">HZP</span>
<span class="s m" style="left:455px;top:838px;transform:scaleX(1.036)">bfV</span>
<span class="s m" style="left:483px;top:838px;transform:scaleX(0.967)">qT5</span>
<span class="s m" style="left:513px;top:838px;transform:scaleX(0.866)">sLZ</span>
<span class="s m" style="left:539px;top:838px;transform:scaleX(0.889)">eRl</span>
<span class="s m" style="left:563px;top:838px;transform:scaleX(0.925)">MEU</span>
<span class="s m" style="left:600px;top:838px;transform:scaleX(0.937)">5qE</span>
<span class="s m" style="left:630px;top:838px;transform:scaleX(0.999)">56i</span>
<span class="s m" style="left:654px;top:838px;transform:scaleX(0.911)">0EA</span>
<span class="s m" style="left:685px;top:838px;transform:scaleX(0.911)">VSh</span>
<span class="s m" style="left:716px;top:838px;transform:scaleX(0.974)">84</span>
<span class="s p" style="left:736.3px;top:838px;transform:scaleX(0.809)">()</span>
<span class="s p" style="left:751px;top:838px;transform:scaleX(0.700)">:</span>
<span class="s k" style="left:760.3px;top:838px;transform:scaleX(1.010)">int</span>
<span class="s p" style="left:785.7px;top:838px;transform:scaleX(0.876)">@</span>
<span class="s n" style="left:802.3px;top:838px;transform:scaleX(0.989)">060</span>
<span class="s n" style="left:832px;top:838px;transform:scaleX(0.999)">000</span>
<span class="s n" style="left:862px;top:838px;transform:scaleX(0.974)">11</span>
<span class="s pr" style="left:177.3px;top:864px;transform:scaleX(1.052)">App</span>
<span class="s pr" style="left:211px;top:864px;transform:scaleX(0.941)">lic</span>
<span class="s pr" style="left:227px;top:864px;transform:scaleX(0.999)">ati</span>
<span class="s pr" style="left:246px;top:864px;transform:scaleX(1.024)">on</span>
<span class="s p" style="left:272px;top:864px;transform:scaleX(0.800)">:</span>
<span class="s ty" style="left:281.3px;top:864px;transform:scaleX(0.856)">8JZ</span>
<span class="s ty" style="left:307px;top:864px;transform:scaleX(0.944)">Q9P</span>
<span class="s ty" style="left:341px;top:864px;transform:scaleX(1.099)">qqo</span>
<span class="s ty" style="left:374px;top:864px;transform:scaleX(0.878)">Gex</span>
<span class="s ty" style="left:403px;top:864px;transform:scaleX(0.888)">tKL</span>
<span class="s ty" style="left:427px;top:864px;transform:scaleX(1.069)">mjg</span>
<span class="s ty" style="left:458px;top:864px;transform:scaleX(0.961)">tBv</span>
<span class="s ty" style="left:483px;top:864px;transform:scaleX(0.935)">4kK</span>
<span class="s ty" style="left:512px;top:864px;transform:scaleX(0.937)">AcZ</span>
<span class="s ty" style="left:542px;top:864px;transform:scaleX(0.963)">urZ</span>
<span class="s ty" style="left:568px;top:864px;transform:scaleX(0.999)">2hO</span>
<span class="s ty" style="left:602px;top:864px;transform:scaleX(1.000)">3MZ</span>
<span class="s ty" style="left:638px;top:864px;transform:scaleX(0.921)">9P2</span>
<span class="s p" style="left:673.7px;top:864px;transform:scaleX(0.876)">@</span>
<span class="s n" style="left:690.3px;top:864px;transform:scaleX(0.989)">170</span>
<span class="s n" style="left:720px;top:864px;transform:scaleX(0.999)">000</span>
<span class="s n" style="left:750px;top:864px;transform:scaleX(0.974)">02</span>
<span class="s m" style="left:205.3px;top:890px;transform:scaleX(0.934)">DB2</span>
<span class="s m" style="left:238px;top:890px;transform:scaleX(0.914)">5XR</span>
<span class="s m" style="left:270px;top:890px;transform:scaleX(0.974)">qWV</span>
<span class="s m" style="left:308px;top:890px;transform:scaleX(0.923)">lhS</span>
<span class="s m" style="left:332px;top:890px;transform:scaleX(0.962)">Nis</span>
<span class="s m" style="left:357px;top:890px;transform:scaleX(0.861)">sLe</span>
<span class="s m" style="left:382px;top:890px;transform:scaleX(0.880)">Tja</span>
<span class="s m" style="left:404px;top:890px;transform:scaleX(1.029)">Qb8</span>
<span class="s m" style="left:439px;top:890px;transform:scaleX(1.032)">9hb</span>
<span class="s m" style="left:470px;top:890px;transform:scaleX(0.971)">SNq</span>
<span class="s m" style="left:504px;top:890px;transform:scaleX(1.043)">itO</span>
<span class="s m" style="left:528px;top:890px;transform:scaleX(0.969)">Qc1</span>
<span class="s m" style="left:560px;top:890px;transform:scaleX(0.797)">FLT</span>
<span class="s p" style="left:586.3px;top:890px;transform:scaleX(0.809)">()</span>
<span class="s p" style="left:601px;top:890px;transform:scaleX(0.700)">:</span>
<span class="s ty" style="left:610.3px;top:890px;transform:scaleX(0.856)">8JZ</span>
<span class="s ty" style="left:636px;top:890px;transform:scaleX(0.944)">Q9P</span>
<span class="s ty" style="left:670px;top:890px;transform:scaleX(1.099)">qqo</span>
<span class="s ty" style="left:703px;top:890px;transform:scaleX(0.878)">Gex</span>
<span class="s ty" style="left:732px;top:890px;transform:scaleX(0.888)">tKL</span>
<span class="s ty" style="left:756px;top:890px;transform:scaleX(1.069)">mjg</span>
<span class="s ty" style="left:787px;top:890px;transform:scaleX(0.961)">tBv</span>
<span class="s ty" style="left:812px;top:890px;transform:scaleX(0.935)">4kK</span>
<span class="s ty" style="left:841px;top:890px;transform:scaleX(0.937)">AcZ</span>
<span class="s ty" style="left:871px;top:890px;transform:scaleX(0.963)">urZ</span>
<span class="s ty" style="left:897px;top:890px;transform:scaleX(0.999)">2hO</span>
<span class="s ty" style="left:931px;top:890px;transform:scaleX(1.000)">3MZ</span>
<span class="s ty" style="left:967px;top:890px;transform:scaleX(0.921)">9P2</span>
<span class="s p" style="left:1002.7px;top:890px;transform:scaleX(0.876)">@</span>
<span class="s n" style="left:1019.3px;top:890px;transform:scaleX(0.989)">060</span>
<span class="s n" style="left:1049px;top:890px;transform:scaleX(0.999)">000</span>
<span class="s n" style="left:1079px;top:890px;transform:scaleX(0.974)">09</span>
<span class="s pr" style="left:177.3px;top:916px;transform:scaleX(0.992)">Com</span>
<span class="s pr" style="left:215px;top:916px;transform:scaleX(1.079)">put</span>
<span class="s pr" style="left:242px;top:916px;transform:scaleX(0.906)">er</span>
<span class="s p" style="left:262px;top:916px;transform:scaleX(0.800)">:</span>
<span class="s ty" style="left:271.3px;top:916px;transform:scaleX(0.936)">C3N</span>
<span class="s ty" style="left:305px;top:916px;transform:scaleX(0.838)">SRK</span>
<span class="s ty" style="left:336px;top:916px;transform:scaleX(1.000)">O4O</span>
<span class="s ty" style="left:374px;top:916px;transform:scaleX(0.941)">V5V</span>
<span class="s ty" style="left:406px;top:916px;transform:scaleX(1.000)">H8N</span>
<span class="s ty" style="left:442px;top:916px;transform:scaleX(0.971)">wbX</span>
<span class="s ty" style="left:476px;top:916px;transform:scaleX(0.939)">TA8</span>
<span class="s ty" style="left:507px;top:916px;transform:scaleX(0.880)">icB</span>
<span class="s ty" style="left:529px;top:916px;transform:scaleX(1.000)">AQN</span>
<span class="s ty" style="left:568px;top:916px;transform:scaleX(0.882)">SB2</span>
<span class="s ty" style="left:598px;top:916px;transform:scaleX(0.950)">iXj</span>
<span class="s ty" style="left:617px;top:916px;transform:scaleX(0.937)">3Cv</span>
<span class="s ty" style="left:647px;top:916px;transform:scaleX(0.984)">98H</span>
<span class="s p" style="left:685.7px;top:916px;transform:scaleX(0.876)">@</span>
<span class="s n" style="left:702.3px;top:916px;transform:scaleX(0.989)">170</span>
<span class="s n" style="left:732px;top:916px;transform:scaleX(0.999)">000</span>
<span class="s n" style="left:762px;top:916px;transform:scaleX(0.974)">01</span>
<span class="s m" style="left:205.3px;top:942px;transform:scaleX(1.025)">7b0</span>
<span class="s m" style="left:236.1px;top:942px;transform:scaleX(0.916)">7XC</span>
<span class="s m" style="left:268.2px;top:942px;transform:scaleX(0.884)">SB1</span>
<span class="s m" style="left:298.2px;top:942px;transform:scaleX(0.941)">Ceg</span>
<span class="s m" style="left:329.3px;top:942px;transform:scaleX(0.888)">UE3</span>
<span class="s m" style="left:360.4px;top:942px;transform:scaleX(0.905)">nSs</span>
<span class="s m" style="left:388.5px;top:942px;transform:scaleX(1.064)">Agd</span>
<span class="s m" style="left:422.5px;top:942px;transform:scaleX(1.002)">pgY</span>
<span class="s m" style="left:454.6px;top:942px;transform:scaleX(0.871)">KCw</span>
<span class="s m" style="left:487.7px;top:942px;transform:scaleX(0.895)">sbJ</span>
<span class="s m" style="left:512.8px;top:942px;transform:scaleX(1.002)">oiw</span>
<span class="s m" style="left:539.8px;top:942px;transform:scaleX(0.970)">7Po</span>
<span class="s m" style="left:570.9px;top:942px;transform:scaleX(0.987)">D29</span>
<span class="s p" style="left:604.3px;top:942px;transform:scaleX(0.809)">()</span>
<span class="s p" style="left:619px;top:942px;transform:scaleX(0.700)">:</span>
<span class="s ty" style="left:628.3px;top:942px;transform:scaleX(0.936)">C3N</span>
<span class="s ty" style="left:662px;top:942px;transform:scaleX(0.838)">SRK</span>
<span class="s ty" style="left:693px;top:942px;transform:scaleX(1.000)">O4O</span>
<span class="s ty" style="left:731px;top:942px;transform:scaleX(0.941)">V5V</span>
<span class="s ty" style="left:763px;top:942px;transform:scaleX(1.000)">H8N</span>
<span class="s ty" style="left:799px;top:942px;transform:scaleX(0.971)">wbX</span>
<span class="s ty" style="left:833px;top:942px;transform:scaleX(0.939)">TA8</span>
<span class="s ty" style="left:864px;top:942px;transform:scaleX(0.880)">icB</span>
<span class="s ty" style="left:886px;top:942px;transform:scaleX(1.000)">AQN</span>
<span class="s ty" style="left:925px;top:942px;transform:scaleX(0.882)">SB2</span>
<span class="s ty" style="left:955px;top:942px;transform:scaleX(0.950)">iXj</span>
<span class="s ty" style="left:974px;top:942px;transform:scaleX(0.937)">3Cv</span>
<span class="s ty" style="left:1004px;top:942px;transform:scaleX(0.984)">98H</span>
<span class="s p" style="left:1042.7px;top:942px;transform:scaleX(0.876)">@</span>
<span class="s n" style="left:1059.3px;top:942px;transform:scaleX(0.989)">060</span>
<span class="s n" style="left:1089px;top:942px;transform:scaleX(0.999)">000</span>
<span class="s n" style="left:1119px;top:942px;transform:scaleX(0.974)">08</span>
<span class="s pr" style="left:177.3px;top:968px;transform:scaleX(0.900)">User</span>
<span class="s p" style="left:217px;top:968px;transform:scaleX(0.800)">:</span>
<span class="s ty" style="left:226.3px;top:968px;transform:scaleX(0.900)">User</span>
<span class="s p" style="left:266.7px;top:968px;transform:scaleX(0.876)">@</span>
<span class="s n" style="left:283.3px;top:968px;transform:scaleX(0.989)">170</span>
<span class="s n" style="left:313px;top:968px;transform:scaleX(0.999)">000</span>
<span class="s n" style="left:343px;top:968px;transform:scaleX(0.974)">03</span>
<span class="s m" style="left:205.3px;top:994px;transform:scaleX(1.033)">vfv</span>
<span class="s m" style="left:229.1px;top:994px;transform:scaleX(1.002)">uIv</span>
<span class="s m" style="left:253.1px;top:994px;transform:scaleX(0.844)">CCK</span>
<span class="s m" style="left:285.2px;top:994px;transform:scaleX(1.039)">t9A</span>
<span class="s m" style="left:313.3px;top:994px;transform:scaleX(0.947)">mYx</span>
<span class="s m" style="left:347.4px;top:994px;transform:scaleX(0.974)">nOX</span>
<span class="s m" style="left:382.5px;top:994px;transform:scaleX(1.002)">lsp</span>
<span class="s m" style="left:405.5px;top:994px;transform:scaleX(0.864)">JLq</span>
<span class="s m" style="left:430.6px;top:994px;transform:scaleX(1.002)">MoL</span>
<span class="s m" style="left:465.7px;top:994px;transform:scaleX(1.002)">zoA</span>
<span class="s m" style="left:496.7px;top:994px;transform:scaleX(1.002)">O4k</span>
<span class="s m" style="left:529.8px;top:994px;transform:scaleX(1.043)">dl5</span>
<span class="s m" style="left:554.9px;top:994px;transform:scaleX(0.966)">PQM</span>
<span class="s p" style="left:595.3px;top:994px;transform:scaleX(0.809)">()</span>
<span class="s p" style="left:610px;top:994px;transform:scaleX(0.700)">:</span>
<span class="s ty" style="left:619.3px;top:994px;transform:scaleX(0.900)">User</span>
<span class="s p" style="left:659.7px;top:994px;transform:scaleX(0.876)">@</span>
<span class="s n" style="left:676.3px;top:994px;transform:scaleX(0.989)">060</span>
<span class="s n" style="left:706px;top:994px;transform:scaleX(0.999)">000</span>
<span class="s n" style="left:736px;top:994px;transform:scaleX(0.977)">0A</span>
<span class="s pr" style="left:177.3px;top:1020px;transform:scaleX(0.965)">Web</span>
<span class="s pr" style="left:213px;top:1020px;transform:scaleX(0.893)">Ser</span>
<span class="s pr" style="left:238px;top:1020px;transform:scaleX(0.955)">vic</span>
<span class="s pr" style="left:259px;top:1020px;transform:scaleX(0.868)">es</span>
<span class="s p" style="left:281px;top:1020px;transform:scaleX(0.800)">:</span>
<span class="s ty" style="left:290.3px;top:1020px;transform:scaleX(0.960)">ClM</span>
<span class="s ty" style="left:321px;top:1020px;transform:scaleX(1.000)">IAr</span>
<span class="s ty" style="left:344px;top:1020px;transform:scaleX(1.000)">rVd</span>
<span class="s ty" style="left:372px;top:1020px;transform:scaleX(0.880)">zjK</span>
<span class="s ty" style="left:394px;top:1020px;transform:scaleX(1.000)">Nbz</span>
<span class="s ty" style="left:426px;top:1020px;transform:scaleX(1.000)">NwM</span>
<span class="s ty" style="left:467px;top:1020px;transform:scaleX(0.937)">5Eb</span>
<span class="s ty" style="left:497px;top:1020px;transform:scaleX(1.041)">8bj</span>
<span class="s ty" style="left:522px;top:1020px;transform:scaleX(0.818)">zEP</span>
<span class="s ty" style="left:549px;top:1020px;transform:scaleX(0.894)">QKK</span>
<span class="s ty" style="left:583px;top:1020px;transform:scaleX(1.030)">o8H</span>
<span class="s ty" style="left:617px;top:1020px;transform:scaleX(1.000)">4fW</span>
<span class="s ty" style="left:649px;top:1020px;transform:scaleX(0.982)">3k8</span>
<span class="s p" style="left:678px;top:1020px;transform:scaleX(0.800)">.</span>
<span class="s ty" style="left:682.3px;top:1020px;transform:scaleX(0.993)">MyW</span>
<span class="s ty" style="left:723px;top:1020px;transform:scaleX(0.937)">ebS</span>
<span class="s ty" style="left:753px;top:1020px;transform:scaleX(0.960)">erv</span>
<span class="s ty" style="left:777px;top:1020px;transform:scaleX(0.890)">ices</span>
<span class="s p" style="left:811.7px;top:1020px;transform:scaleX(0.876)">@</span>
<span class="s n" style="left:828.3px;top:1020px;transform:scaleX(0.989)">170</span>
<span class="s n" style="left:858px;top:1020px;transform:scaleX(0.999)">000</span>
<span class="s n" style="left:888px;top:1020px;transform:scaleX(0.974)">04</span>
<span class="s m" style="left:205.3px;top:1046px;transform:scaleX(0.991)">PMt</span>
<span class="s m" style="left:237px;top:1046px;transform:scaleX(1.041)">ujq</span>
<span class="s m" style="left:262px;top:1046px;transform:scaleX(0.920)">l3F</span>
<span class="s m" style="left:285px;top:1046px;transform:scaleX(0.929)">rwx</span>
<span class="s m" style="left:311px;top:1046px;transform:scaleX(0.965)">Lkq</span>
<span class="s m" style="left:339px;top:1046px;transform:scaleX(0.894)">KOS</span>
<span class="s m" style="left:373px;top:1046px;transform:scaleX(0.857)">RYa</span>
<span class="s m" style="left:403px;top:1046px;transform:scaleX(0.970)">HnZ</span>
<span class="s m" style="left:436px;top:1046px;transform:scaleX(0.925)">1KI</span>
<span class="s m" style="left:461px;top:1046px;transform:scaleX(0.857)">szL</span>
<span class="s m" style="left:485px;top:1046px;transform:scaleX(0.905)">5Be</span>
<span class="s m" style="left:514px;top:1046px;transform:scaleX(0.941)">7wZ</span>
<span class="s m" style="left:546px;top:1046px;transform:scaleX(0.985)">AH8</span>
<span class="s p" style="left:581.3px;top:1046px;transform:scaleX(0.809)">()</span>
<span class="s p" style="left:596px;top:1046px;transform:scaleX(0.700)">:</span>
<span class="s ty" style="left:605.3px;top:1046px;transform:scaleX(0.960)">ClM</span>
<span class="s ty" style="left:636px;top:1046px;transform:scaleX(1.000)">IAr</span>
<span class="s ty" style="left:659px;top:1046px;transform:scaleX(1.000)">rVd</span>
<span class="s ty" style="left:687px;top:1046px;transform:scaleX(0.880)">zjK</span>
<span class="s ty" style="left:709px;top:1046px;transform:scaleX(1.000)">Nbz</span>
<span class="s ty" style="left:741px;top:1046px;transform:scaleX(1.000)">NwM</span>
<span class="s ty" style="left:782px;top:1046px;transform:scaleX(0.937)">5Eb</span>
<span class="s ty" style="left:812px;top:1046px;transform:scaleX(1.041)">8bj</span>
<span class="s ty" style="left:837px;top:1046px;transform:scaleX(0.818)">zEP</span>
<span class="s ty" style="left:864px;top:1046px;transform:scaleX(0.894)">QKK</span>
<span class="s ty" style="left:898px;top:1046px;transform:scaleX(1.030)">o8H</span>
<span class="s ty" style="left:932px;top:1046px;transform:scaleX(1.000)">4fW</span>
<span class="s ty" style="left:964px;top:1046px;transform:scaleX(0.982)">3k8</span>
<span class="s p" style="left:993px;top:1046px;transform:scaleX(0.800)">.</span>
<span class="s ty" style="left:997.3px;top:1046px;transform:scaleX(0.993)">MyW</span>
<span class="s ty" style="left:1038px;top:1046px;transform:scaleX(0.937)">ebS</span>
<span class="s ty" style="left:1068px;top:1046px;transform:scaleX(0.960)">erv</span>
<span class="s ty" style="left:1092px;top:1046px;transform:scaleX(0.890)">ices</span>
<span class="s p" style="left:1126.7px;top:1046px;transform:scaleX(0.876)">@</span>
<span class="s n" style="left:1143.3px;top:1046px;transform:scaleX(0.989)">060</span>
<span class="s n" style="left:1173px;top:1046px;transform:scaleX(0.999)">000</span>
<span class="s n" style="left:1203px;top:1046px;transform:scaleX(0.886)">0B</span>
<span class="s f" style="left:177.3px;top:1072px;transform:scaleX(0.989)">46y</span>
<span class="s f" style="left:206px;top:1072px;transform:scaleX(0.916)">2Jt</span>
<span class="s f" style="left:228px;top:1072px;transform:scaleX(0.933)">QBi</span>
<span class="s f" style="left:256px;top:1072px;transform:scaleX(0.999)">2qz</span>
<span class="s f" style="left:285px;top:1072px;transform:scaleX(0.920)">Pyl</span>
<span class="s f" style="left:308px;top:1072px;transform:scaleX(0.968)">uuV</span>
<span class="s f" style="left:339px;top:1072px;transform:scaleX(0.905)">4eY</span>
<span class="s f" style="left:368px;top:1072px;transform:scaleX(0.852)">BeP</span>
<span class="s f" style="left:397px;top:1072px;transform:scaleX(1.000)">ivj</span>
<span class="s f" style="left:414px;top:1072px;transform:scaleX(0.903)">4zP</span>
<span class="s f" style="left:442px;top:1072px;transform:scaleX(0.970)">X5A</span>
<span class="s f" style="left:475px;top:1072px;transform:scaleX(0.937)">Ed5</span>
<span class="s f" style="left:505px;top:1072px;transform:scaleX(0.838)">FZK</span>
<span class="s p" style="left:539px;top:1072px;transform:scaleX(0.800)">:</span>
<span class="s ty" style="left:548.3px;top:1072px;transform:scaleX(0.960)">ClM</span>
<span class="s ty" style="left:579px;top:1072px;transform:scaleX(1.000)">IAr</span>
<span class="s ty" style="left:602px;top:1072px;transform:scaleX(1.000)">rVd</span>
<span class="s ty" style="left:630px;top:1072px;transform:scaleX(0.880)">zjK</span>
<span class="s ty" style="left:652px;top:1072px;transform:scaleX(1.000)">Nbz</span>
<span class="s ty" style="left:684px;top:1072px;transform:scaleX(1.000)">NwM</span>
<span class="s ty" style="left:725px;top:1072px;transform:scaleX(0.937)">5Eb</span>
<span class="s ty" style="left:755px;top:1072px;transform:scaleX(1.041)">8bj</span>
<span class="s ty" style="left:780px;top:1072px;transform:scaleX(0.818)">zEP</span>
<span class="s ty" style="left:807px;top:1072px;transform:scaleX(0.894)">QKK</span>
<span class="s ty" style="left:841px;top:1072px;transform:scaleX(1.030)">o8H</span>
<span class="s ty" style="left:875px;top:1072px;transform:scaleX(1.000)">4fW</span>
<span class="s ty" style="left:907px;top:1072px;transform:scaleX(0.982)">3k8</span>
<span class="s p" style="left:936px;top:1072px;transform:scaleX(0.800)">.</span>
<span class="s ty" style="left:940.3px;top:1072px;transform:scaleX(0.915)">Thr</span>
<span class="s ty" style="left:965px;top:1072px;transform:scaleX(0.966)">ead</span>
<span class="s ty" style="left:994px;top:1072px;transform:scaleX(0.925)">Saf</span>
<span class="s ty" style="left:1019px;top:1072px;transform:scaleX(0.999)">eOb</span>
<span class="s ty" style="left:1053px;top:1072px;transform:scaleX(0.913)">jec</span>
<span class="s ty" style="left:1074px;top:1072px;transform:scaleX(0.956)">tPr</span>
<span class="s ty" style="left:1096px;top:1072px;transform:scaleX(1.043)">ovi</span>
<span class="s ty" style="left:1120px;top:1072px;transform:scaleX(0.980)">der</span>
<span class="s p" style="left:1147.2px;top:1072px;transform:scaleX(0.942)">&lt;</span>
<span class="s ty" style="left:1158.3px;top:1072px;transform:scaleX(0.900)">User</span>
<span class="s p" style="left:1193.9px;top:1072px;transform:scaleX(0.942)">&gt;</span>
<span class="s p" style="left:1210.7px;top:1072px;transform:scaleX(0.876)">@</span>
<span class="s n" style="left:1227.3px;top:1072px;transform:scaleX(0.989)">040</span>
<span class="s n" style="left:1257px;top:1072px;transform:scaleX(0.999)">000</span>
<span class="s n" style="left:1287px;top:1072px;transform:scaleX(0.974)">03</span>
<span class="s f" style="left:177.3px;top:1098px;transform:scaleX(0.945)">ayI</span>
<span class="s f" style="left:200px;top:1098px;transform:scaleX(1.026)">Nm3</span>
<span class="s f" style="left:239px;top:1098px;transform:scaleX(0.866)">FLv</span>
<span class="s f" style="left:265px;top:1098px;transform:scaleX(0.852)">nEB</span>
<span class="s f" style="left:294px;top:1098px;transform:scaleX(1.000)">pQs</span>
<span class="s f" style="left:327px;top:1098px;transform:scaleX(0.973)">9Sm</span>
<span class="s f" style="left:363px;top:1098px;transform:scaleX(0.972)">UgU</span>
<span class="s f" style="left:398px;top:1098px;transform:scaleX(1.099)">pfI</span>
<span class="s f" style="left:420px;top:1098px;transform:scaleX(0.940)">XiW</span>
<span class="s f" style="left:451px;top:1098px;transform:scaleX(0.885)">EU4</span>
<span class="s f" style="left:482px;top:1098px;transform:scaleX(0.897)">GBH</span>
<span class="s f" style="left:517px;top:1098px;transform:scaleX(1.030)">9pD</span>
<span class="s f" style="left:551px;top:1098px;transform:scaleX(0.905)">OSZ</span>
<span class="s p" style="left:590px;top:1098px;transform:scaleX(0.800)">:</span>
<span class="s ty" style="left:599.3px;top:1098px;transform:scaleX(0.960)">ClM</span>
<span class="s ty" style="left:630px;top:1098px;transform:scaleX(1.000)">IAr</span>
<span class="s ty" style="left:653px;top:1098px;transform:scaleX(1.000)">rVd</span>
<span class="s ty" style="left:681px;top:1098px;transform:scaleX(0.880)">zjK</span>
<span class="s ty" style="left:703px;top:1098px;transform:scaleX(1.000)">Nbz</span>
<span class="s ty" style="left:735px;top:1098px;transform:scaleX(1.000)">NwM</span>
<span class="s ty" style="left:776px;top:1098px;transform:scaleX(0.937)">5Eb</span>
<span class="s ty" style="left:806px;top:1098px;transform:scaleX(1.041)">8bj</span>
<span class="s ty" style="left:831px;top:1098px;transform:scaleX(0.818)">zEP</span>
<span class="s ty" style="left:858px;top:1098px;transform:scaleX(0.894)">QKK</span>
<span class="s ty" style="left:892px;top:1098px;transform:scaleX(1.030)">o8H</span>
<span class="s ty" style="left:926px;top:1098px;transform:scaleX(1.000)">4fW</span>
<span class="s ty" style="left:958px;top:1098px;transform:scaleX(0.982)">3k8</span>
<span class="s p" style="left:987px;top:1098px;transform:scaleX(0.800)">.</span>
<span class="s ty" style="left:991.3px;top:1098px;transform:scaleX(0.915)">Thr</span>
<span class="s ty" style="left:1016px;top:1098px;transform:scaleX(0.966)">ead</span>
<span class="s ty" style="left:1045px;top:1098px;transform:scaleX(0.925)">Saf</span>
<span class="s ty" style="left:1070px;top:1098px;transform:scaleX(0.999)">eOb</span>
<span class="s ty" style="left:1104px;top:1098px;transform:scaleX(0.913)">jec</span>
<span class="s ty" style="left:1125px;top:1098px;transform:scaleX(0.956)">tPr</span>
<span class="s ty" style="left:1147px;top:1098px;transform:scaleX(1.043)">ovi</span>
<span class="s ty" style="left:1171px;top:1098px;transform:scaleX(0.980)">der</span>
<span class="s p" style="left:1198.2px;top:1098px;transform:scaleX(0.942)">&lt;</span>
<span class="s ty" style="left:1209.3px;top:1098px;transform:scaleX(0.856)">8JZ</span>
<span class="s ty" style="left:1235px;top:1098px;transform:scaleX(0.944)">Q9P</span>
<span class="s ty" style="left:1269px;top:1098px;transform:scaleX(1.099)">qqo</span>
<span class="s ty" style="left:1302px;top:1098px;transform:scaleX(0.878)">Gex</span>
<span class="s ty" style="left:1331px;top:1098px;transform:scaleX(0.888)">tKL</span>
<span class="s ty" style="left:1355px;top:1098px;transform:scaleX(1.069)">mjg</span>
<span class="s ty" style="left:1386px;top:1098px;transform:scaleX(0.961)">tBv</span>
<span class="s ty" style="left:1411px;top:1098px;transform:scaleX(0.935)">4kK</span>
<span class="s ty" style="left:1440px;top:1098px;transform:scaleX(0.937)">AcZ</span>
<span class="s ty" style="left:1470px;top:1098px;transform:scaleX(0.963)">urZ</span>
<span class="s ty" style="left:1496px;top:1098px;transform:scaleX(0.999)">2hO</span>
<span class="s ty" style="left:1530px;top:1098px;transform:scaleX(1.000)">3MZ</span>
<span class="s ty" style="left:1566px;top:1098px;transform:scaleX(0.921)">9P2</span>
<span class="s p" style="left:1596.9px;top:1098px;transform:scaleX(0.942)">&gt;</span>
<span class="s p" style="left:1613.7px;top:1098px;transform:scaleX(0.876)">@</span>
<span class="s n" style="left:1630.3px;top:1098px;transform:scaleX(0.989)">040</span>
<span class="s n" style="left:1660px;top:1098px;transform:scaleX(0.999)">000</span>
<span class="s n" style="left:1690px;top:1098px;transform:scaleX(0.974)">02</span>
<span class="s f" style="left:177.3px;top:1124px;transform:scaleX(0.937)">KUo</span>
<span class="s f" style="left:210.1px;top:1124px;transform:scaleX(0.944)">1AB</span>
<span class="s f" style="left:242.2px;top:1124px;transform:scaleX(0.952)">BXM</span>
<span class="s f" style="left:279.4px;top:1124px;transform:scaleX(0.860)">KTI</span>
<span class="s f" style="left:303.5px;top:1124px;transform:scaleX(0.898)">OBK</span>
<span class="s f" style="left:337.6px;top:1124px;transform:scaleX(0.964)">jqB</span>
<span class="s f" style="left:362.7px;top:1124px;transform:scaleX(1.037)">pzb</span>
<span class="s f" style="left:392.8px;top:1124px;transform:scaleX(0.974)">7AU</span>
<span class="s f" style="left:426.9px;top:1124px;transform:scaleX(0.975)">H8U</span>
<span class="s f" style="left:462px;top:1124px;transform:scaleX(0.936)">L27</span>
<span class="s f" style="left:490.1px;top:1124px;transform:scaleX(0.928)">mRY</span>
<span class="s f" style="left:527.2px;top:1124px;transform:scaleX(1.003)">NQA</span>
<span class="s f" style="left:566.4px;top:1124px;transform:scaleX(0.987)">pZ0</span>
<span class="s p" style="left:602.5px;top:1124px;transform:scaleX(0.800)">:</span>
<span class="s ty" style="left:611.8px;top:1124px;transform:scaleX(0.960)">ClM</span>
<span class="s ty" style="left:642.5px;top:1124px;transform:scaleX(1.000)">IAr</span>
<span class="s ty" style="left:665.5px;top:1124px;transform:scaleX(1.000)">rVd</span>
<span class="s ty" style="left:693.5px;top:1124px;transform:scaleX(0.880)">zjK</span>
<span class="s ty" style="left:715.5px;top:1124px;transform:scaleX(1.000)">Nbz</span>
<span class="s ty" style="left:747.5px;top:1124px;transform:scaleX(1.000)">NwM</span>
<span class="s ty" style="left:788.5px;top:1124px;transform:scaleX(0.937)">5Eb</span>
<span class="s ty" style="left:818.5px;top:1124px;transform:scaleX(1.041)">8bj</span>
<span class="s ty" style="left:843.5px;top:1124px;transform:scaleX(0.818)">zEP</span>
<span class="s ty" style="left:870.5px;top:1124px;transform:scaleX(0.894)">QKK</span>
<span class="s ty" style="left:904.5px;top:1124px;transform:scaleX(1.030)">o8H</span>
<span class="s ty" style="left:938.5px;top:1124px;transform:scaleX(1.000)">4fW</span>
<span class="s ty" style="left:970.5px;top:1124px;transform:scaleX(0.982)">3k8</span>
<span class="s p" style="left:999.5px;top:1124px;transform:scaleX(0.800)">.</span>
<span class="s ty" style="left:1003.8px;top:1124px;transform:scaleX(0.915)">Thr</span>
<span class="s ty" style="left:1028.5px;top:1124px;transform:scaleX(0.966)">ead</span>
<span class="s ty" style="left:1057.5px;top:1124px;transform:scaleX(0.925)">Saf</span>
<span class="s ty" style="left:1082.5px;top:1124px;transform:scaleX(0.999)">eOb</span>
<span class="s ty" style="left:1116.5px;top:1124px;transform:scaleX(0.913)">jec</span>
<span class="s ty" style="left:1137.5px;top:1124px;transform:scaleX(0.956)">tPr</span>
<span class="s ty" style="left:1159.5px;top:1124px;transform:scaleX(1.043)">ovi</span>
<span class="s ty" style="left:1183.5px;top:1124px;transform:scaleX(0.980)">der</span>
<span class="s p" style="left:1210.7px;top:1124px;transform:scaleX(0.942)">&lt;</span>
<span class="s ty" style="left:1221.8px;top:1124px;transform:scaleX(0.960)">ClM</span>
<span class="s ty" style="left:1252.5px;top:1124px;transform:scaleX(1.000)">IAr</span>
<span class="s ty" style="left:1275.5px;top:1124px;transform:scaleX(1.000)">rVd</span>
<span class="s ty" style="left:1303.5px;top:1124px;transform:scaleX(0.880)">zjK</span>
<span class="s ty" style="left:1325.5px;top:1124px;transform:scaleX(1.000)">Nbz</span>
<span class="s ty" style="left:1357.5px;top:1124px;transform:scaleX(1.000)">NwM</span>
<span class="s ty" style="left:1398.5px;top:1124px;transform:scaleX(0.937)">5Eb</span>
<span class="s ty" style="left:1428.5px;top:1124px;transform:scaleX(1.041)">8bj</span>
<span class="s ty" style="left:1453.5px;top:1124px;transform:scaleX(0.818)">zEP</span>
<span class="s ty" style="left:1480.5px;top:1124px;transform:scaleX(0.894)">QKK</span>
<span class="s ty" style="left:1514.5px;top:1124px;transform:scaleX(1.030)">o8H</span>
<span class="s ty" style="left:1548.5px;top:1124px;transform:scaleX(1.000)">4fW</span>
<span class="s ty" style="left:1580.5px;top:1124px;transform:scaleX(0.982)">3k8</span>
<span class="s p" style="left:1609.5px;top:1124px;transform:scaleX(0.800)">.</span>
<span class="s ty" style="left:1613.8px;top:1124px;transform:scaleX(0.993)">MyW</span>
<span class="s ty" style="left:1654.5px;top:1124px;transform:scaleX(0.937)">ebS</span>
<span class="s ty" style="left:1684.5px;top:1124px;transform:scaleX(0.960)">erv</span>
<span class="s ty" style="left:1708.5px;top:1124px;transform:scaleX(0.890)">ices</span>
<span class="s p" style="left:1738.4px;top:1124px;transform:scaleX(0.942)">&gt;</span>
<span class="s p" style="left:1755.2px;top:1124px;transform:scaleX(0.876)">@</span>
<span class="s n" style="left:1771.8px;top:1124px;transform:scaleX(0.989)">040</span>
<span class="s n" style="left:1801.5px;top:1124px;transform:scaleX(0.999)">000</span>
<span class="s n" style="left:1831.5px;top:1124px;transform:scaleX(0.974)">04</span>
<span class="s f" style="left:177.3px;top:1150px;transform:scaleX(1.014)">mN1</span>
<span class="s f" style="left:215.8px;top:1150px;transform:scaleX(0.910)">Yw7</span>
<span class="s f" style="left:247.7px;top:1150px;transform:scaleX(0.939)">X8U</span>
<span class="s f" style="left:280.6px;top:1150px;transform:scaleX(1.023)">MA4</span>
<span class="s f" style="left:318.4px;top:1150px;transform:scaleX(0.927)">nJo</span>
<span class="s f" style="left:345.3px;top:1150px;transform:scaleX(1.037)">ibh</span>
<span class="s f" style="left:370.2px;top:1150px;transform:scaleX(1.048)">l0t</span>
<span class="s f" style="left:390.2px;top:1150px;transform:scaleX(0.797)">eFJ</span>
<span class="s f" style="left:414.1px;top:1150px;transform:scaleX(0.935)">XTg</span>
<span class="s f" style="left:445px;top:1150px;transform:scaleX(0.853)">SLw</span>
<span class="s f" style="left:474.8px;top:1150px;transform:scaleX(0.885)">CR9</span>
<span class="s f" style="left:506.7px;top:1150px;transform:scaleX(0.958)">Dzl</span>
<span class="s f" style="left:531.6px;top:1150px;transform:scaleX(0.839)">LUS</span>
<span class="s p" style="left:566.5px;top:1150px;transform:scaleX(0.800)">:</span>
<span class="s ty" style="left:575.8px;top:1150px;transform:scaleX(0.960)">ClM</span>
<span class="s ty" style="left:606.5px;top:1150px;transform:scaleX(1.000)">IAr</span>
<span class="s ty" style="left:629.5px;top:1150px;transform:scaleX(1.000)">rVd</span>
<span class="s ty" style="left:657.5px;top:1150px;transform:scaleX(0.880)">zjK</span>
<span class="s ty" style="left:679.5px;top:1150px;transform:scaleX(1.000)">Nbz</span>
<span class="s ty" style="left:711.5px;top:1150px;transform:scaleX(1.000)">NwM</span>
<span class="s ty" style="left:752.5px;top:1150px;transform:scaleX(0.937)">5Eb</span>
<span class="s ty" style="left:782.5px;top:1150px;transform:scaleX(1.041)">8bj</span>
<span class="s ty" style="left:807.5px;top:1150px;transform:scaleX(0.818)">zEP</span>
<span class="s ty" style="left:834.5px;top:1150px;transform:scaleX(0.894)">QKK</span>
<span class="s ty" style="left:868.5px;top:1150px;transform:scaleX(1.030)">o8H</span>
<span class="s ty" style="left:902.5px;top:1150px;transform:scaleX(1.000)">4fW</span>
<span class="s ty" style="left:934.5px;top:1150px;transform:scaleX(0.982)">3k8</span>
<span class="s p" style="left:963.5px;top:1150px;transform:scaleX(0.800)">.</span>
<span class="s ty" style="left:967.8px;top:1150px;transform:scaleX(0.915)">Thr</span>
<span class="s ty" style="left:992.5px;top:1150px;transform:scaleX(0.966)">ead</span>
<span class="s ty" style="left:1021.5px;top:1150px;transform:scaleX(0.925)">Saf</span>
<span class="s ty" style="left:1046.5px;top:1150px;transform:scaleX(0.999)">eOb</span>
<span class="s ty" style="left:1080.5px;top:1150px;transform:scaleX(0.913)">jec</span>
<span class="s ty" style="left:1101.5px;top:1150px;transform:scaleX(0.956)">tPr</span>
<span class="s ty" style="left:1123.5px;top:1150px;transform:scaleX(1.043)">ovi</span>
<span class="s ty" style="left:1147.5px;top:1150px;transform:scaleX(0.980)">der</span>
<span class="s p" style="left:1174.7px;top:1150px;transform:scaleX(0.942)">&lt;</span>
<span class="s ty" style="left:1185.8px;top:1150px;transform:scaleX(0.936)">C3N</span>
<span class="s ty" style="left:1219.5px;top:1150px;transform:scaleX(0.838)">SRK</span>
<span class="s ty" style="left:1250.5px;top:1150px;transform:scaleX(1.000)">O4O</span>
<span class="s ty" style="left:1288.5px;top:1150px;transform:scaleX(0.941)">V5V</span>
<span class="s ty" style="left:1320.5px;top:1150px;transform:scaleX(1.000)">H8N</span>
<span class="s ty" style="left:1356.5px;top:1150px;transform:scaleX(0.971)">wbX</span>
<span class="s ty" style="left:1390.5px;top:1150px;transform:scaleX(0.939)">TA8</span>
<span class="s ty" style="left:1421.5px;top:1150px;transform:scaleX(0.880)">icB</span>
<span class="s ty" style="left:1443.5px;top:1150px;transform:scaleX(1.000)">AQN</span>
<span class="s ty" style="left:1482.5px;top:1150px;transform:scaleX(0.882)">SB2</span>
<span class="s ty" style="left:1512.5px;top:1150px;transform:scaleX(0.950)">iXj</span>
<span class="s ty" style="left:1531.5px;top:1150px;transform:scaleX(0.937)">3Cv</span>
<span class="s ty" style="left:1561.5px;top:1150px;transform:scaleX(0.984)">98H</span>
<span class="s p" style="left:1595.4px;top:1150px;transform:scaleX(0.942)">&gt;</span>
<span class="s p" style="left:1612.2px;top:1150px;transform:scaleX(0.876)">@</span>
<span class="s n" style="left:1628.8px;top:1150px;transform:scaleX(0.989)">040</span>
<span class="s n" style="left:1658.5px;top:1150px;transform:scaleX(0.999)">000</span>
<span class="s n" style="left:1688.5px;top:1150px;transform:scaleX(0.974)">01</span>
<span class="s ty" style="left:177.3px;top:1176px;transform:scaleX(0.993)">MyW</span>
<span class="s ty" style="left:218px;top:1176px;transform:scaleX(0.937)">ebS</span>
<span class="s ty" style="left:248px;top:1176px;transform:scaleX(0.960)">erv</span>
<span class="s ty" style="left:272px;top:1176px;transform:scaleX(0.890)">ices</span>
<span class="s p" style="left:306.7px;top:1176px;transform:scaleX(0.876)">@</span>
<span class="s n" style="left:323.3px;top:1176px;transform:scaleX(0.989)">020</span>
<span class="s n" style="left:353px;top:1176px;transform:scaleX(0.999)">000</span>
<span class="s n" style="left:383px;top:1176px;transform:scaleX(0.974)">05</span>
<span class="s t" style="left:205.3px;top:1202px;transform:scaleX(0.861)">Bas</span>
<span class="s t" style="left:232px;top:1202px;transform:scaleX(0.899)">e</span>
<span class="s t" style="left:246px;top:1202px;transform:scaleX(0.966)">Typ</span>
<span class="s t" style="left:275px;top:1202px;transform:scaleX(0.899)">e</span>
<span class="s t" style="left:289px;top:1202px;transform:scaleX(0.999)">and</span>
<span class="s t" style="left:324px;top:1202px;transform:scaleX(1.049)">Int</span>
<span class="s t" style="left:345px;top:1202px;transform:scaleX(1.000)">erf</span>
<span class="s t" style="left:366px;top:1202px;transform:scaleX(0.881)">aces</span>
<span class="s t" style="left:205.3px;top:1228px;transform:scaleX(0.955)">Der</span>
<span class="s t" style="left:233px;top:1228px;transform:scaleX(0.956)">ive</span>
<span class="s t" style="left:255px;top:1228px;transform:scaleX(1.099)">d</span>
<span class="s t" style="left:271px;top:1228px;transform:scaleX(0.966)">Typ</span>
<span class="s t" style="left:300px;top:1228px;transform:scaleX(0.868)">es</span>
<span class="s ty" style="left:205.3px;top:1254px;transform:scaleX(0.993)">MyW</span>
<span class="s ty" style="left:246px;top:1254px;transform:scaleX(0.937)">ebS</span>
<span class="s ty" style="left:276px;top:1254px;transform:scaleX(0.960)">erv</span>
<span class="s ty" style="left:300px;top:1254px;transform:scaleX(0.890)">ices</span>
<span class="s p" style="left:329.3px;top:1254px;transform:scaleX(0.809)">()</span>
<span class="s p" style="left:344px;top:1254px;transform:scaleX(0.700)">:</span>
<span class="s k" style="left:353.3px;top:1254px;transform:scaleX(1.036)">void</span>
<span class="s p" style="left:393.7px;top:1254px;transform:scaleX(0.876)">@</span>
<span class="s n" style="left:410.3px;top:1254px;transform:scaleX(0.989)">060</span>
<span class="s n" style="left:440px;top:1254px;transform:scaleX(0.999)">000</span>
<span class="s n" style="left:470px;top:1254px;transform:scaleX(0.891)">1C</span>
<span class="s m" style="left:205.3px;top:1280px;transform:scaleX(0.886)">Cre</span>
<span class="s m" style="left:231px;top:1280px;transform:scaleX(0.959)">ate</span>
<span class="s m" style="left:255px;top:1280px;transform:scaleX(0.759)">__I</span>
<span class="s m" style="left:274px;top:1280px;transform:scaleX(1.000)">nst</span>
<span class="s m" style="left:298px;top:1280px;transform:scaleX(0.930)">anc</span>
<span class="s m" style="left:325px;top:1280px;transform:scaleX(0.749)">e__</span>
<span class="s p" style="left:348px;top:1280px;transform:scaleX(0.834)">(</span>
<span class="s tp" style="left:353px;top:1280px;transform:scaleX(0.819)">T</span>
<span class="s p" style="left:362.3px;top:1280px;transform:scaleX(0.784)">)</span>
<span class="s p" style="left:372px;top:1280px;transform:scaleX(0.700)">:</span>
<span class="s tp" style="left:381px;top:1280px;transform:scaleX(0.819)">T</span>
<span class="s p" style="left:395.7px;top:1280px;transform:scaleX(0.876)">@</span>
<span class="s n" style="left:412.3px;top:1280px;transform:scaleX(0.989)">060</span>
<span class="s n" style="left:442px;top:1280px;transform:scaleX(0.999)">000</span>
<span class="s n" style="left:472px;top:1280px;transform:scaleX(0.977)">1A</span>
<span class="s m" style="left:205.3px;top:1306px;transform:scaleX(0.950)">Dis</span>
<span class="s m" style="left:230px;top:1306px;transform:scaleX(1.034)">pos</span>
<span class="s m" style="left:260px;top:1306px;transform:scaleX(0.766)">e__</span>
<span class="s m" style="left:283px;top:1306px;transform:scaleX(0.958)">Ins</span>
<span class="s m" style="left:306px;top:1306px;transform:scaleX(0.999)">tan</span>
<span class="s m" style="left:331px;top:1306px;transform:scaleX(0.781)">ce__</span>
<span class="s p" style="left:362px;top:1306px;transform:scaleX(0.834)">(</span>
<span class="s k" style="left:367.3px;top:1306px;transform:scaleX(0.962)">ref</span>
<span class="s tp" style="left:393px;top:1306px;transform:scaleX(0.819)">T</span>
<span class="s p" style="left:402.3px;top:1306px;transform:scaleX(0.784)">)</span>
<span class="s p" style="left:412px;top:1306px;transform:scaleX(0.700)">:</span>
<span class="s k" style="left:421.3px;top:1306px;transform:scaleX(1.036)">void</span>
<span class="s p" style="left:461.7px;top:1306px;transform:scaleX(0.876)">@</span>
<span class="s n" style="left:478.3px;top:1306px;transform:scaleX(0.989)">060</span>
<span class="s n" style="left:508px;top:1306px;transform:scaleX(0.999)">000</span>
<span class="s n" style="left:538px;top:1306px;transform:scaleX(0.886)">1B</span>
<span class="s m" style="left:205.3px;top:1332px;transform:scaleX(0.927)">Equ</span>
<span class="s m" style="left:235px;top:1332px;transform:scaleX(0.891)">als</span>
<span class="s p" style="left:256px;top:1332px;transform:scaleX(0.834)">(</span>
<span class="s k" style="left:261.3px;top:1332px;transform:scaleX(1.070)">obj</span>
<span class="s k" style="left:287px;top:1332px;transform:scaleX(0.937)">ect</span>
<span class="s p" style="left:310.3px;top:1332px;transform:scaleX(0.784)">)</span>
<span class="s p" style="left:320px;top:1332px;transform:scaleX(0.700)">:</span>
<span class="s k" style="left:329.3px;top:1332px;transform:scaleX(1.064)">bool</span>
<span class="s p" style="left:371.7px;top:1332px;transform:scaleX(0.876)">@</span>
<span class="s n" style="left:388.3px;top:1332px;transform:scaleX(0.989)">060</span>
<span class="s n" style="left:418px;top:1332px;transform:scaleX(0.999)">000</span>
<span class="s n" style="left:448px;top:1332px;transform:scaleX(0.974)">16</span>
<span class="s m" style="left:205.3px;top:1358px;transform:scaleX(0.920)">Get</span>
<span class="s m" style="left:232px;top:1358px;transform:scaleX(0.937)">Has</span>
<span class="s m" style="left:262px;top:1358px;transform:scaleX(0.969)">hCo</span>
<span class="s m" style="left:294px;top:1358px;transform:scaleX(0.974)">de</span>
<span class="s p" style="left:314.3px;top:1358px;transform:scaleX(0.809)">()</span>
<span class="s p" style="left:329px;top:1358px;transform:scaleX(0.700)">:</span>
<span class="s k" style="left:338.3px;top:1358px;transform:scaleX(1.010)">int</span>
<span class="s p" style="left:363.7px;top:1358px;transform:scaleX(0.876)">@</span>
<span class="s n" style="left:380.3px;top:1358px;transform:scaleX(0.989)">060</span>
<span class="s n" style="left:410px;top:1358px;transform:scaleX(0.999)">000</span>
<span class="s n" style="left:440px;top:1358px;transform:scaleX(0.974)">17</span>
<span class="s m" style="left:205.3px;top:1384px;transform:scaleX(0.920)">Get</span>
<span class="s m" style="left:232px;top:1384px;transform:scaleX(0.937)">Type</span>
<span class="s p" style="left:270.3px;top:1384px;transform:scaleX(0.809)">()</span>
<span class="s p" style="left:285px;top:1384px;transform:scaleX(0.700)">:</span>
<span class="s ty" style="left:294.3px;top:1384px;transform:scaleX(0.930)">Type</span>
<span class="s p" style="left:337.7px;top:1384px;transform:scaleX(0.876)">@</span>
<span class="s n" style="left:354.3px;top:1384px;transform:scaleX(0.989)">060</span>
<span class="s n" style="left:384px;top:1384px;transform:scaleX(0.999)">000</span>
<span class="s n" style="left:414px;top:1384px;transform:scaleX(0.974)">18</span>
<span class="s m" style="left:205.3px;top:1410px;transform:scaleX(0.900)">ToS</span>
<span class="s m" style="left:235px;top:1410px;transform:scaleX(1.067)">tri</span>
<span class="s m" style="left:251px;top:1410px;transform:scaleX(1.024)">ng</span>
<span class="s p" style="left:272.3px;top:1410px;transform:scaleX(0.809)">()</span>
<span class="s p" style="left:287px;top:1410px;transform:scaleX(0.700)">:</span>
<span class="s k" style="left:296.3px;top:1410px;transform:scaleX(0.985)">str</span>
<span class="s k" style="left:316px;top:1410px;transform:scaleX(1.020)">ing</span>
<span class="s p" style="left:346.7px;top:1410px;transform:scaleX(0.876)">@</span>
<span class="s n" style="left:363.3px;top:1410px;transform:scaleX(0.989)">060</span>
<span class="s n" style="left:393px;top:1410px;transform:scaleX(0.999)">000</span>
<span class="s n" style="left:423px;top:1410px;transform:scaleX(0.974)">19</span>
<span class="s ty" style="left:177.3px;top:1436px;transform:scaleX(0.915)">Thr</span>
<span class="s ty" style="left:202px;top:1436px;transform:scaleX(0.966)">ead</span>
<span class="s ty" style="left:231px;top:1436px;transform:scaleX(0.925)">Saf</span>
<span class="s ty" style="left:256px;top:1436px;transform:scaleX(0.999)">eOb</span>
<span class="s ty" style="left:290px;top:1436px;transform:scaleX(0.913)">jec</span>
<span class="s ty" style="left:311px;top:1436px;transform:scaleX(0.956)">tPr</span>
<span class="s ty" style="left:333px;top:1436px;transform:scaleX(1.043)">ovi</span>
<span class="s ty" style="left:357px;top:1436px;transform:scaleX(0.980)">der</span>
<span class="s p" style="left:384.2px;top:1436px;transform:scaleX(0.942)">&lt;</span>
<span class="s tp" style="left:395px;top:1436px;transform:scaleX(0.819)">T</span>
<span class="s p" style="left:404.9px;top:1436px;transform:scaleX(0.942)">&gt;</span>
<span class="s p" style="left:421.7px;top:1436px;transform:scaleX(0.876)">@</span>
<span class="s n" style="left:438.3px;top:1436px;transform:scaleX(0.989)">020</span>
<span class="s n" style="left:468px;top:1436px;transform:scaleX(0.999)">000</span>
<span class="s n" style="left:498px;top:1436px;transform:scaleX(0.974)">06</span>
<span class="s ns" style="left:120.3px;top:1462px;transform:scaleX(0.978)">Stub</span>
<svg width="1898" height="1493" viewBox="0 0 1898 1493">
<g transform="translate(0,5)"><path d="M19.2,4.8V16.1H7.9Z" fill="#F1F1F1"/></g><g transform="translate(0,5)"><path d="M36.9,0.9H51.2V14H49.1V2.8H36.9Z M33.9,4.05H48V16.9H46.1V5.8H33.9Z M31,7H45.1V20.9H31Z M34.2,10.6V17.8H41.1V10.6Z" fill="#F5CE93" fill-rule="evenodd"/></g>
<g transform="translate(28,31)"><path d="M19.2,4.8V16.1H7.9Z" fill="#F1F1F1"/></g><g transform="translate(28,31)"><rect x="28.2" y="3.1" width="17.5" height="15.8" fill="#1E1E1E"/><path d="M29.2,4.2H35.2V10.3H29.2Z M38.7,4.2H45V10.3H38.7Z M29.2,12.3H45V18.1H29.2Z" fill="#B482DA"/></g>
<g transform="translate(57,57)"><path d="M12.5,3.3L21,11.6L12.5,19.9Z M14.1,6.9L14.1,16.3L18.8,11.6Z" fill="#FFFFFF" fill-rule="evenodd"/></g><g transform="translate(57,57)"><rect x="28.2" y="3.1" width="17.5" height="15.8" fill="#1E1E1E"/><path d="M29.2,4.2H35.2V10.3H29.2Z M38.7,4.2H45V10.3H38.7Z M29.2,12.3H45V18.1H29.2Z" fill="#B482DA"/></g>
<g transform="translate(57,83)"><path d="M12.5,3.3L21,11.6L12.5,19.9Z M14.1,6.9L14.1,16.3L18.8,11.6Z" fill="#FFFFFF" fill-rule="evenodd"/></g><g transform="translate(57,83)"><path d="M29,7.5H35.7V15H29Z M37,10.5H40V11.8H37Z M41.3,5.9H51V16.6H41.3Z" fill="#C8C8C8"/></g>
<g transform="translate(57,109)"><path d="M12.5,3.3L21,11.6L12.5,19.9Z M14.1,6.9L14.1,16.3L18.8,11.6Z" fill="#FFFFFF" fill-rule="evenodd"/></g><g transform="translate(57,109)"><path d="M29,7.5H35.7V15H29Z M37,10.5H40V11.8H37Z M41.3,5.9H51V16.6H41.3Z" fill="#C8C8C8"/></g>
<g transform="translate(57,135)"><path d="M12.5,3.3L21,11.6L12.5,19.9Z M14.1,6.9L14.1,16.3L18.8,11.6Z" fill="#FFFFFF" fill-rule="evenodd"/></g><g transform="translate(57,135)"><path d="M37,4.4C34.9,4.4 34.2,5.3 34.2,6.9V9.6C34.2,11.2 33.4,12.2 31.3,12.2C33.4,12.2 34.2,13.2 34.2,14.8V17.5C34.2,19.1 34.9,20 37,20" fill="none" stroke="#C8C8C8" stroke-width="2.5"/><path d="M43,4.4C45.1,4.4 45.8,5.3 45.8,6.9V9.6C45.8,11.2 46.6,12.2 48.7,12.2C46.6,12.2 45.8,13.2 45.8,14.8V17.5C45.8,19.1 45.1,20 43,20" fill="none" stroke="#C8C8C8" stroke-width="2.5"/></g>
<g transform="translate(57,161)"><path d="M19.2,4.8V16.1H7.9Z" fill="#F1F1F1"/></g><g transform="translate(57,161)"><path d="M37,4.4C34.9,4.4 34.2,5.3 34.2,6.9V9.6C34.2,11.2 33.4,12.2 31.3,12.2C33.4,12.2 34.2,13.2 34.2,14.8V17.5C34.2,19.1 34.9,20 37,20" fill="none" stroke="#C8C8C8" stroke-width="2.5"/><path d="M43,4.4C45.1,4.4 45.8,5.3 45.8,6.9V9.6C45.8,11.2 46.6,12.2 48.7,12.2C46.6,12.2 45.8,13.2 45.8,14.8V17.5C45.8,19.1 45.1,20 43,20" fill="none" stroke="#C8C8C8" stroke-width="2.5"/></g>
<g transform="translate(86,187)"><path d="M19.2,4.8V16.1H7.9Z" fill="#F1F1F1"/></g><g transform="translate(86,187)"><path d="M32.8,1.4L37,5.8L32.8,10.2L28.6,5.8Z M40.95,4.35L44.1,7.5L40.95,10.65L37.8,7.5Z M42,10.6L45.2,13.8L42,17L38.8,13.8Z" fill="#F5CE93"/><path d="M35,6.5H39M35.75,6.5V12.65H39.8" fill="none" stroke="#F5CE93" stroke-width="1.7"/></g><g transform="translate(128.9,201.85)"><path d="M4.1,7.55 L0.45,3.75 C-0.45,2.7 -0.2,0.85 1.15,0.25 C2.3,-0.25 3.55,0.3 4.1,1.55 C4.65,0.3 5.9,-0.25 7.05,0.25 C8.4,0.85 8.65,2.7 7.75,3.75 Z" fill="#CACACA"/></g>
<g transform="translate(114,213)"><path d="M12.5,3.3L21,11.6L12.5,19.9Z M14.1,6.9L14.1,16.3L18.8,11.6Z" fill="#FFFFFF" fill-rule="evenodd"/></g><g transform="translate(114,213)"><path d="M30.7,6.1H36.6L38.2,2.9H50.6Q51.2,2.9 51.2,3.5V19.4Q51.2,20 50.6,20H31.3Q30.7,20 30.7,19.4Z M39.7,4.3L39,5.75H48.9V4.3Z" fill="#D9AA68" fill-rule="evenodd"/></g>
<g transform="translate(114,239)"><path d="M12.5,3.3L21,11.6L12.5,19.9Z M14.1,6.9L14.1,16.3L18.8,11.6Z" fill="#FFFFFF" fill-rule="evenodd"/></g><g transform="translate(114,239)"><path d="M30.7,6.1H36.6L38.2,2.9H50.6Q51.2,2.9 51.2,3.5V19.4Q51.2,20 50.6,20H31.3Q30.7,20 30.7,19.4Z M39.7,4.3L39,5.75H48.9V4.3Z" fill="#D9AA68" fill-rule="evenodd"/></g>
<g transform="translate(114,265)"><path d="M35.3,5.5L40.7,8.6V15.3L35.3,18.4L29.9,15.3V8.6Z M29.9,8.6L35.3,11.8L40.7,8.6M35.3,11.8V18.4" fill="none" stroke="#A571CE" stroke-width="1.1" stroke-linejoin="round"/></g>
<g transform="translate(114,291)"><path d="M35.3,5.5L40.7,8.6V15.3L35.3,18.4L29.9,15.3V8.6Z M29.9,8.6L35.3,11.8L40.7,8.6M35.3,11.8V18.4" fill="none" stroke="#A571CE" stroke-width="1.1" stroke-linejoin="round"/></g>
<g transform="translate(114,317)"><path d="M35.3,5.5L40.7,8.6V15.3L35.3,18.4L29.9,15.3V8.6Z M29.9,8.6L35.3,11.8L40.7,8.6M35.3,11.8V18.4" fill="none" stroke="#A571CE" stroke-width="1.1" stroke-linejoin="round"/></g>
<g transform="translate(86,343)"><path d="M19.2,4.8V16.1H7.9Z" fill="#F1F1F1"/></g><g transform="translate(86,343)"><path d="M32.8,1.4L37,5.8L32.8,10.2L28.6,5.8Z M40.95,4.35L44.1,7.5L40.95,10.65L37.8,7.5Z M42,10.6L45.2,13.8L42,17L38.8,13.8Z" fill="#F5CE93"/><path d="M35,6.5H39M35.75,6.5V12.65H39.8" fill="none" stroke="#F5CE93" stroke-width="1.7"/></g><g transform="translate(128.9,357.85)"><path d="M4.1,7.55 L0.45,3.75 C-0.45,2.7 -0.2,0.85 1.15,0.25 C2.3,-0.25 3.55,0.3 4.1,1.55 C4.65,0.3 5.9,-0.25 7.05,0.25 C8.4,0.85 8.65,2.7 7.75,3.75 Z" fill="#CACACA"/></g>
<g transform="translate(114,369)"><path d="M12.5,3.3L21,11.6L12.5,19.9Z M14.1,6.9L14.1,16.3L18.8,11.6Z" fill="#FFFFFF" fill-rule="evenodd"/></g><g transform="translate(114,369)"><path d="M30.7,6.1H36.6L38.2,2.9H50.6Q51.2,2.9 51.2,3.5V19.4Q51.2,20 50.6,20H31.3Q30.7,20 30.7,19.4Z M39.7,4.3L39,5.75H48.9V4.3Z" fill="#D9AA68" fill-rule="evenodd"/></g>
<g transform="translate(114,395)"><path d="M12.5,3.3L21,11.6L12.5,19.9Z M14.1,6.9L14.1,16.3L18.8,11.6Z" fill="#FFFFFF" fill-rule="evenodd"/></g><g transform="translate(114,395)"><path d="M30.7,6.1H36.6L38.2,2.9H50.6Q51.2,2.9 51.2,3.5V19.4Q51.2,20 50.6,20H31.3Q30.7,20 30.7,19.4Z M39.7,4.3L39,5.75H48.9V4.3Z" fill="#D9AA68" fill-rule="evenodd"/></g>
<g transform="translate(114,421)"><path d="M35.3,5.5L40.7,8.6V15.3L35.3,18.4L29.9,15.3V8.6Z M29.9,8.6L35.3,11.8L40.7,8.6M35.3,11.8V18.4" fill="none" stroke="#A571CE" stroke-width="1.1" stroke-linejoin="round"/></g>
<g transform="translate(114,447)"><path d="M35.3,5.5L40.7,8.6V15.3L35.3,18.4L29.9,15.3V8.6Z M29.9,8.6L35.3,11.8L40.7,8.6M35.3,11.8V18.4" fill="none" stroke="#A571CE" stroke-width="1.1" stroke-linejoin="round"/></g>
<g transform="translate(114,473)"><path d="M35.3,5.5L40.7,8.6V15.3L35.3,18.4L29.9,15.3V8.6Z M29.9,8.6L35.3,11.8L40.7,8.6M35.3,11.8V18.4" fill="none" stroke="#A571CE" stroke-width="1.1" stroke-linejoin="round"/></g>
<g transform="translate(86,499)"><path d="M19.2,4.8V16.1H7.9Z" fill="#F1F1F1"/></g><g transform="translate(86,495.9)"><path d="M29.1,4.15H35.75V10.6H29.1Z M38.2,4.15H44.95V10.6H38.2Z M29.1,12.15H44.95V18.05H29.1Z" fill="#B482DA"/></g><g transform="translate(128.9,513.85)"><path d="M4.1,7.55 L0.45,3.75 C-0.45,2.7 -0.2,0.85 1.15,0.25 C2.3,-0.25 3.55,0.3 4.1,1.55 C4.65,0.3 5.9,-0.25 7.05,0.25 C8.4,0.85 8.65,2.7 7.75,3.75 Z" fill="#CACACA"/></g>
<g transform="translate(114,525)"><path d="M12.5,3.3L21,11.6L12.5,19.9Z M14.1,6.9L14.1,16.3L18.8,11.6Z" fill="#FFFFFF" fill-rule="evenodd"/></g><g transform="translate(114,525)"><path d="M30.7,6.1H36.6L38.2,2.9H50.6Q51.2,2.9 51.2,3.5V19.4Q51.2,20 50.6,20H31.3Q30.7,20 30.7,19.4Z M39.7,4.3L39,5.75H48.9V4.3Z" fill="#D9AA68" fill-rule="evenodd"/></g>
<g transform="translate(114,551)"><path d="M30.7,6.1H36.6L38.2,2.9H50.6Q51.2,2.9 51.2,3.5V19.4Q51.2,20 50.6,20H31.3Q30.7,20 30.7,19.4Z M39.7,4.3L39,5.75H48.9V4.3Z" fill="#D9AA68" fill-rule="evenodd"/></g>
<g transform="translate(114,573.9)"><path d="M35.3,5.5L40.7,8.6V15.3L35.3,18.4L29.9,15.3V8.6Z M29.9,8.6L35.3,11.8L40.7,8.6M35.3,11.8V18.4" fill="none" stroke="#A571CE" stroke-width="1.1" stroke-linejoin="round"/></g><g transform="translate(114,577)"><path d="M43.95,17.6V16.9C43.95,15.2 45.2,14.3 46.9,14.3C48.6,14.3 49.85,15.2 49.85,16.9V17.6" fill="none" stroke="#DCDCDC" stroke-width="1.7"/><path d="M42.9,17.4H50.9V22.8H42.9Z M46.2,19.2V21H47.6V19.2Z" fill="#DCDCDC" fill-rule="evenodd"/></g>
<g transform="translate(114,603)"><path d="M35.3,5.5L40.7,8.6V15.3L35.3,18.4L29.9,15.3V8.6Z M29.9,8.6L35.3,11.8L40.7,8.6M35.3,11.8V18.4" fill="none" stroke="#A571CE" stroke-width="1.1" stroke-linejoin="round"/></g>
<g transform="translate(114,629)"><path d="M35.3,5.5L40.7,8.6V15.3L35.3,18.4L29.9,15.3V8.6Z M29.9,8.6L35.3,11.8L40.7,8.6M35.3,11.8V18.4" fill="none" stroke="#A571CE" stroke-width="1.1" stroke-linejoin="round"/></g>
<g transform="translate(114,655)"><path d="M35.3,5.5L40.7,8.6V15.3L35.3,18.4L29.9,15.3V8.6Z M29.9,8.6L35.3,11.8L40.7,8.6M35.3,11.8V18.4" fill="none" stroke="#A571CE" stroke-width="1.1" stroke-linejoin="round"/></g>
<g transform="translate(114,681)"><path d="M35.3,5.5L40.7,8.6V15.3L35.3,18.4L29.9,15.3V8.6Z M29.9,8.6L35.3,11.8L40.7,8.6M35.3,11.8V18.4" fill="none" stroke="#A571CE" stroke-width="1.1" stroke-linejoin="round"/></g>
<g transform="translate(114,707)"><path d="M35.3,5.5L40.7,8.6V15.3L35.3,18.4L29.9,15.3V8.6Z M29.9,8.6L35.3,11.8L40.7,8.6M35.3,11.8V18.4" fill="none" stroke="#A571CE" stroke-width="1.1" stroke-linejoin="round"/></g>
<g transform="translate(114,733)"><path d="M35.3,5.5L40.7,8.6V15.3L35.3,18.4L29.9,15.3V8.6Z M29.9,8.6L35.3,11.8L40.7,8.6M35.3,11.8V18.4" fill="none" stroke="#A571CE" stroke-width="1.1" stroke-linejoin="round"/></g>
<g transform="translate(114,759)"><path d="M35.3,5.5L40.7,8.6V15.3L35.3,18.4L29.9,15.3V8.6Z M29.9,8.6L35.3,11.8L40.7,8.6M35.3,11.8V18.4" fill="none" stroke="#A571CE" stroke-width="1.1" stroke-linejoin="round"/></g>
<g transform="translate(114,785)"><path d="M35.3,5.5L40.7,8.6V15.3L35.3,18.4L29.9,15.3V8.6Z M29.9,8.6L35.3,11.8L40.7,8.6M35.3,11.8V18.4" fill="none" stroke="#A571CE" stroke-width="1.1" stroke-linejoin="round"/></g>
<g transform="translate(114,811)"><path d="M35.3,5.5L40.7,8.6V15.3L35.3,18.4L29.9,15.3V8.6Z M29.9,8.6L35.3,11.8L40.7,8.6M35.3,11.8V18.4" fill="none" stroke="#A571CE" stroke-width="1.1" stroke-linejoin="round"/></g>
<g transform="translate(114,837)"><path d="M35.3,5.5L40.7,8.6V15.3L35.3,18.4L29.9,15.3V8.6Z M29.9,8.6L35.3,11.8L40.7,8.6M35.3,11.8V18.4" fill="none" stroke="#A571CE" stroke-width="1.1" stroke-linejoin="round"/></g>
<g transform="translate(114,863)"><path d="M19.2,4.8V16.1H7.9Z" fill="#F1F1F1"/></g><g transform="translate(114,863)"><path d="M31.8,14.4L38.6,7.8" fill="none" stroke="#C8C8C8" stroke-width="4" stroke-linecap="round"/><circle cx="39.5" cy="6.9" r="5.4" fill="#C8C8C8"/><path d="M38.4,5.9L43.6,-2L50,-3L48.1,2.8L41.3,8.6Z" fill="#252526"/></g><g transform="translate(156.9,877.85)"><path d="M4.1,7.55 L0.45,3.75 C-0.45,2.7 -0.2,0.85 1.15,0.25 C2.3,-0.25 3.55,0.3 4.1,1.55 C4.65,0.3 5.9,-0.25 7.05,0.25 C8.4,0.85 8.65,2.7 7.75,3.75 Z" fill="#CACACA"/></g>
<g transform="translate(142,885.9)"><path d="M35.3,5.5L40.7,8.6V15.3L35.3,18.4L29.9,15.3V8.6Z M29.9,8.6L35.3,11.8L40.7,8.6M35.3,11.8V18.4" fill="none" stroke="#A571CE" stroke-width="1.1" stroke-linejoin="round"/></g><g transform="translate(184.9,903.85)"><path d="M4.1,7.55 L0.45,3.75 C-0.45,2.7 -0.2,0.85 1.15,0.25 C2.3,-0.25 3.55,0.3 4.1,1.55 C4.65,0.3 5.9,-0.25 7.05,0.25 C8.4,0.85 8.65,2.7 7.75,3.75 Z" fill="#CACACA"/></g>
<g transform="translate(114,915)"><path d="M19.2,4.8V16.1H7.9Z" fill="#F1F1F1"/></g><g transform="translate(114,915)"><path d="M31.8,14.4L38.6,7.8" fill="none" stroke="#C8C8C8" stroke-width="4" stroke-linecap="round"/><circle cx="39.5" cy="6.9" r="5.4" fill="#C8C8C8"/><path d="M38.4,5.9L43.6,-2L50,-3L48.1,2.8L41.3,8.6Z" fill="#252526"/></g><g transform="translate(156.9,929.85)"><path d="M4.1,7.55 L0.45,3.75 C-0.45,2.7 -0.2,0.85 1.15,0.25 C2.3,-0.25 3.55,0.3 4.1,1.55 C4.65,0.3 5.9,-0.25 7.05,0.25 C8.4,0.85 8.65,2.7 7.75,3.75 Z" fill="#CACACA"/></g>
<g transform="translate(142,937.9)"><path d="M35.3,5.5L40.7,8.6V15.3L35.3,18.4L29.9,15.3V8.6Z M29.9,8.6L35.3,11.8L40.7,8.6M35.3,11.8V18.4" fill="none" stroke="#A571CE" stroke-width="1.1" stroke-linejoin="round"/></g><g transform="translate(184.9,955.85)"><path d="M4.1,7.55 L0.45,3.75 C-0.45,2.7 -0.2,0.85 1.15,0.25 C2.3,-0.25 3.55,0.3 4.1,1.55 C4.65,0.3 5.9,-0.25 7.05,0.25 C8.4,0.85 8.65,2.7 7.75,3.75 Z" fill="#CACACA"/></g>
<g transform="translate(114,967)"><path d="M19.2,4.8V16.1H7.9Z" fill="#F1F1F1"/></g><g transform="translate(114,967)"><path d="M31.8,14.4L38.6,7.8" fill="none" stroke="#C8C8C8" stroke-width="4" stroke-linecap="round"/><circle cx="39.5" cy="6.9" r="5.4" fill="#C8C8C8"/><path d="M38.4,5.9L43.6,-2L50,-3L48.1,2.8L41.3,8.6Z" fill="#252526"/></g><g transform="translate(156.9,981.85)"><path d="M4.1,7.55 L0.45,3.75 C-0.45,2.7 -0.2,0.85 1.15,0.25 C2.3,-0.25 3.55,0.3 4.1,1.55 C4.65,0.3 5.9,-0.25 7.05,0.25 C8.4,0.85 8.65,2.7 7.75,3.75 Z" fill="#CACACA"/></g>
<g transform="translate(142,989.9)"><path d="M35.3,5.5L40.7,8.6V15.3L35.3,18.4L29.9,15.3V8.6Z M29.9,8.6L35.3,11.8L40.7,8.6M35.3,11.8V18.4" fill="none" stroke="#A571CE" stroke-width="1.1" stroke-linejoin="round"/></g><g transform="translate(184.9,1007.85)"><path d="M4.1,7.55 L0.45,3.75 C-0.45,2.7 -0.2,0.85 1.15,0.25 C2.3,-0.25 3.55,0.3 4.1,1.55 C4.65,0.3 5.9,-0.25 7.05,0.25 C8.4,0.85 8.65,2.7 7.75,3.75 Z" fill="#CACACA"/></g>
<g transform="translate(114,1019)"><path d="M19.2,4.8V16.1H7.9Z" fill="#F1F1F1"/></g><g transform="translate(114,1019)"><path d="M31.8,14.4L38.6,7.8" fill="none" stroke="#C8C8C8" stroke-width="4" stroke-linecap="round"/><circle cx="39.5" cy="6.9" r="5.4" fill="#C8C8C8"/><path d="M38.4,5.9L43.6,-2L50,-3L48.1,2.8L41.3,8.6Z" fill="#252526"/></g><g transform="translate(156.9,1033.85)"><path d="M4.1,7.55 L0.45,3.75 C-0.45,2.7 -0.2,0.85 1.15,0.25 C2.3,-0.25 3.55,0.3 4.1,1.55 C4.65,0.3 5.9,-0.25 7.05,0.25 C8.4,0.85 8.65,2.7 7.75,3.75 Z" fill="#CACACA"/></g>
<g transform="translate(142,1041.9)"><path d="M35.3,5.5L40.7,8.6V15.3L35.3,18.4L29.9,15.3V8.6Z M29.9,8.6L35.3,11.8L40.7,8.6M35.3,11.8V18.4" fill="none" stroke="#A571CE" stroke-width="1.1" stroke-linejoin="round"/></g><g transform="translate(184.9,1059.85)"><path d="M4.1,7.55 L0.45,3.75 C-0.45,2.7 -0.2,0.85 1.15,0.25 C2.3,-0.25 3.55,0.3 4.1,1.55 C4.65,0.3 5.9,-0.25 7.05,0.25 C8.4,0.85 8.65,2.7 7.75,3.75 Z" fill="#CACACA"/></g>
<g transform="translate(114,1071)"><path d="M38.7,1L45,4.2V10.5L35.5,15.1L29,11.3V6.3Z M33.2,5.6L38.8,3L41,4.6L35.5,7.4Z" fill="#75BEFF" fill-rule="evenodd"/></g><g transform="translate(114,1071)"><path d="M43.95,17.6V16.9C43.95,15.2 45.2,14.3 46.9,14.3C48.6,14.3 49.85,15.2 49.85,16.9V17.6" fill="none" stroke="#DCDCDC" stroke-width="1.7"/><path d="M42.9,17.4H50.9V22.8H42.9Z M46.2,19.2V21H47.6V19.2Z" fill="#DCDCDC" fill-rule="evenodd"/></g>
<g transform="translate(114,1097)"><path d="M38.7,1L45,4.2V10.5L35.5,15.1L29,11.3V6.3Z M33.2,5.6L38.8,3L41,4.6L35.5,7.4Z" fill="#75BEFF" fill-rule="evenodd"/></g><g transform="translate(114,1097)"><path d="M43.95,17.6V16.9C43.95,15.2 45.2,14.3 46.9,14.3C48.6,14.3 49.85,15.2 49.85,16.9V17.6" fill="none" stroke="#DCDCDC" stroke-width="1.7"/><path d="M42.9,17.4H50.9V22.8H42.9Z M46.2,19.2V21H47.6V19.2Z" fill="#DCDCDC" fill-rule="evenodd"/></g>
<g transform="translate(114,1123)"><path d="M38.7,1L45,4.2V10.5L35.5,15.1L29,11.3V6.3Z M33.2,5.6L38.8,3L41,4.6L35.5,7.4Z" fill="#75BEFF" fill-rule="evenodd"/></g><g transform="translate(114,1123)"><path d="M43.95,17.6V16.9C43.95,15.2 45.2,14.3 46.9,14.3C48.6,14.3 49.85,15.2 49.85,16.9V17.6" fill="none" stroke="#DCDCDC" stroke-width="1.7"/><path d="M42.9,17.4H50.9V22.8H42.9Z M46.2,19.2V21H47.6V19.2Z" fill="#DCDCDC" fill-rule="evenodd"/></g>
<g transform="translate(114,1149)"><path d="M38.7,1L45,4.2V10.5L35.5,15.1L29,11.3V6.3Z M33.2,5.6L38.8,3L41,4.6L35.5,7.4Z" fill="#75BEFF" fill-rule="evenodd"/></g><g transform="translate(114,1149)"><path d="M43.95,17.6V16.9C43.95,15.2 45.2,14.3 46.9,14.3C48.6,14.3 49.85,15.2 49.85,16.9V17.6" fill="none" stroke="#DCDCDC" stroke-width="1.7"/><path d="M42.9,17.4H50.9V22.8H42.9Z M46.2,19.2V21H47.6V19.2Z" fill="#DCDCDC" fill-rule="evenodd"/></g>
<g transform="translate(114,1175)"><path d="M19.2,4.8V16.1H7.9Z" fill="#F1F1F1"/></g><g transform="translate(114,1175)"><path d="M32.8,1.4L37,5.8L32.8,10.2L28.6,5.8Z M40.95,4.35L44.1,7.5L40.95,10.65L37.8,7.5Z M42,10.6L45.2,13.8L42,17L38.8,13.8Z" fill="#F5CE93"/><path d="M35,6.5H39M35.75,6.5V12.65H39.8" fill="none" stroke="#F5CE93" stroke-width="1.7"/></g><g transform="translate(156.9,1189.85)"><path d="M4.1,7.55 L0.45,3.75 C-0.45,2.7 -0.2,0.85 1.15,0.25 C2.3,-0.25 3.55,0.3 4.1,1.55 C4.65,0.3 5.9,-0.25 7.05,0.25 C8.4,0.85 8.65,2.7 7.75,3.75 Z" fill="#CACACA"/></g>
<g transform="translate(142,1201)"><path d="M12.5,3.3L21,11.6L12.5,19.9Z M14.1,6.9L14.1,16.3L18.8,11.6Z" fill="#FFFFFF" fill-rule="evenodd"/></g><g transform="translate(142,1201)"><path d="M30.7,6.1H36.6L38.2,2.9H50.6Q51.2,2.9 51.2,3.5V19.4Q51.2,20 50.6,20H31.3Q30.7,20 30.7,19.4Z M39.7,4.3L39,5.75H48.9V4.3Z" fill="#D9AA68" fill-rule="evenodd"/></g>
<g transform="translate(142,1227)"><path d="M30.7,6.1H36.6L38.2,2.9H50.6Q51.2,2.9 51.2,3.5V19.4Q51.2,20 50.6,20H31.3Q30.7,20 30.7,19.4Z M39.7,4.3L39,5.75H48.9V4.3Z" fill="#D9AA68" fill-rule="evenodd"/></g>
<g transform="translate(142,1253)"><path d="M35.3,5.5L40.7,8.6V15.3L35.3,18.4L29.9,15.3V8.6Z M29.9,8.6L35.3,11.8L40.7,8.6M35.3,11.8V18.4" fill="none" stroke="#A571CE" stroke-width="1.1" stroke-linejoin="round"/></g>
<g transform="translate(142,1275.9)"><path d="M35.3,5.5L40.7,8.6V15.3L35.3,18.4L29.9,15.3V8.6Z M29.9,8.6L35.3,11.8L40.7,8.6M35.3,11.8V18.4" fill="none" stroke="#A571CE" stroke-width="1.1" stroke-linejoin="round"/></g><g transform="translate(142,1279)"><path d="M43.95,17.6V16.9C43.95,15.2 45.2,14.3 46.9,14.3C48.6,14.3 49.85,15.2 49.85,16.9V17.6" fill="none" stroke="#DCDCDC" stroke-width="1.7"/><path d="M42.9,17.4H50.9V22.8H42.9Z M46.2,19.2V21H47.6V19.2Z" fill="#DCDCDC" fill-rule="evenodd"/></g>
<g transform="translate(142,1301.9)"><path d="M35.3,5.5L40.7,8.6V15.3L35.3,18.4L29.9,15.3V8.6Z M29.9,8.6L35.3,11.8L40.7,8.6M35.3,11.8V18.4" fill="none" stroke="#A571CE" stroke-width="1.1" stroke-linejoin="round"/></g><g transform="translate(142,1305)"><path d="M43.95,17.6V16.9C43.95,15.2 45.2,14.3 46.9,14.3C48.6,14.3 49.85,15.2 49.85,16.9V17.6" fill="none" stroke="#DCDCDC" stroke-width="1.7"/><path d="M42.9,17.4H50.9V22.8H42.9Z M46.2,19.2V21H47.6V19.2Z" fill="#DCDCDC" fill-rule="evenodd"/></g>
<g transform="translate(142,1331)"><path d="M35.3,5.5L40.7,8.6V15.3L35.3,18.4L29.9,15.3V8.6Z M29.9,8.6L35.3,11.8L40.7,8.6M35.3,11.8V18.4" fill="none" stroke="#A571CE" stroke-width="1.1" stroke-linejoin="round"/></g>
<g transform="translate(142,1357)"><path d="M35.3,5.5L40.7,8.6V15.3L35.3,18.4L29.9,15.3V8.6Z M29.9,8.6L35.3,11.8L40.7,8.6M35.3,11.8V18.4" fill="none" stroke="#A571CE" stroke-width="1.1" stroke-linejoin="round"/></g>
<g transform="translate(142,1379.9)"><path d="M35.3,5.5L40.7,8.6V15.3L35.3,18.4L29.9,15.3V8.6Z M29.9,8.6L35.3,11.8L40.7,8.6M35.3,11.8V18.4" fill="none" stroke="#A571CE" stroke-width="1.1" stroke-linejoin="round"/></g><g transform="translate(184.9,1397.85)"><path d="M4.1,7.55 L0.45,3.75 C-0.45,2.7 -0.2,0.85 1.15,0.25 C2.3,-0.25 3.55,0.3 4.1,1.55 C4.65,0.3 5.9,-0.25 7.05,0.25 C8.4,0.85 8.65,2.7 7.75,3.75 Z" fill="#CACACA"/></g>
<g transform="translate(142,1409)"><path d="M35.3,5.5L40.7,8.6V15.3L35.3,18.4L29.9,15.3V8.6Z M29.9,8.6L35.3,11.8L40.7,8.6M35.3,11.8V18.4" fill="none" stroke="#A571CE" stroke-width="1.1" stroke-linejoin="round"/></g>
<g transform="translate(114,1435)"><path d="M12.5,3.3L21,11.6L12.5,19.9Z M14.1,6.9L14.1,16.3L18.8,11.6Z" fill="#FFFFFF" fill-rule="evenodd"/></g><g transform="translate(114,1435)"><path d="M34.2,7.3L30.9,10L34.2,12.8M46,7.3L49.4,10L46,12.8" fill="none" stroke="#C8C8C8" stroke-width="1.5"/><path d="M34,0.9H46.3V4.6H45.2C45,3.2 44.4,2.4 43,2.4H41.6V11C41.6,11.9 42,12.3 43.6,12.4V13.7H36.8V12.4C38.4,12.3 38.8,11.9 38.8,11V2.4H37.4C36,2.4 35.4,3.2 35.2,4.6H34Z" fill="#C8C8C8"/></g><g transform="translate(156.9,1449.85)"><path d="M4.1,7.55 L0.45,3.75 C-0.45,2.7 -0.2,0.85 1.15,0.25 C2.3,-0.25 3.55,0.3 4.1,1.55 C4.65,0.3 5.9,-0.25 7.05,0.25 C8.4,0.85 8.65,2.7 7.75,3.75 Z" fill="#CACACA"/></g>
<g transform="translate(57,1461)"><path d="M12.5,3.3L21,11.6L12.5,19.9Z M14.1,6.9L14.1,16.3L18.8,11.6Z" fill="#FFFFFF" fill-rule="evenodd"/></g><g transform="translate(57,1461)"><path d="M37,4.4C34.9,4.4 34.2,5.3 34.2,6.9V9.6C34.2,11.2 33.4,12.2 31.3,12.2C33.4,12.2 34.2,13.2 34.2,14.8V17.5C34.2,19.1 34.9,20 37,20" fill="none" stroke="#C8C8C8" stroke-width="2.5"/><path d="M43,4.4C45.1,4.4 45.8,5.3 45.8,6.9V9.6C45.8,11.2 46.6,12.2 48.7,12.2C46.6,12.2 45.8,13.2 45.8,14.8V17.5C45.8,19.1 45.1,20 43,20" fill="none" stroke="#C8C8C8" stroke-width="2.5"/></g>
<g transform="translate(0,1487)"><path d="M12.5,3.3L21,11.6L12.5,19.9Z M14.1,6.9L14.1,16.3L18.8,11.6Z" fill="#FFFFFF" fill-rule="evenodd"/></g><g transform="translate(0,1487)"><path d="M36.9,0.9H51.2V14H49.1V2.8H36.9Z M33.9,4.05H48V16.9H46.1V5.8H33.9Z M31,7H45.1V20.9H31Z M34.2,10.6V17.8H41.1V10.6Z" fill="#D6D6D6" fill-rule="evenodd"/></g>
</svg>
</body></html>
